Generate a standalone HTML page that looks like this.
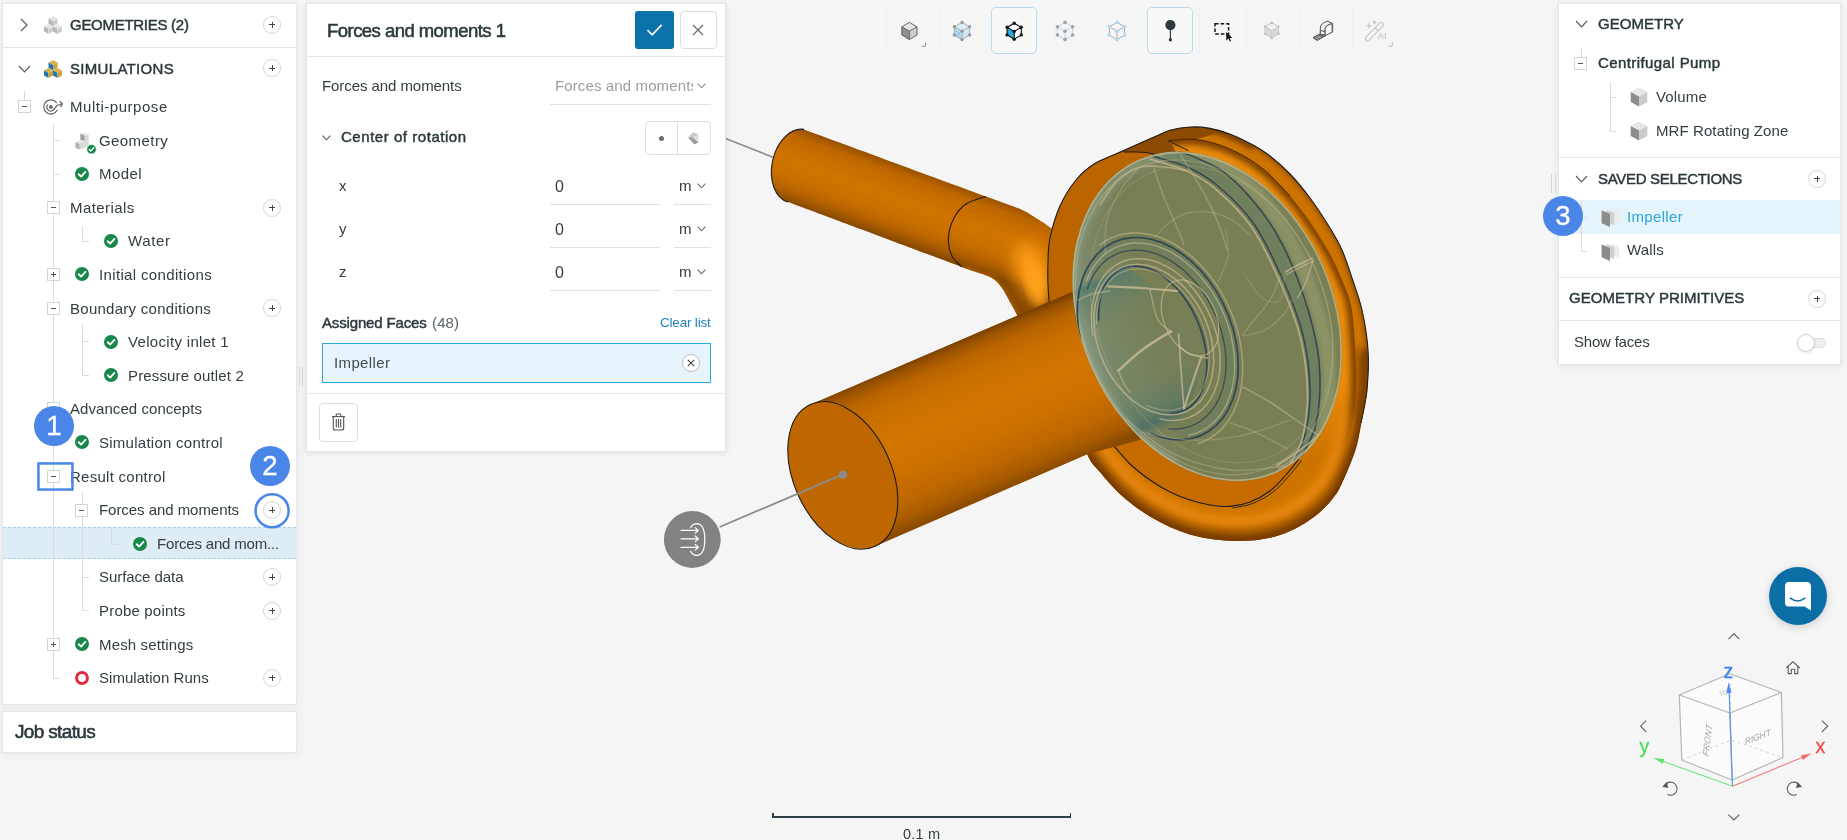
<!DOCTYPE html>
<html lang="en"><head><meta charset="utf-8"><title>Forces and moments - Centrifugal Pump</title>
<style>
*{box-sizing:border-box;margin:0;padding:0}
html,body{width:1847px;height:840px;overflow:hidden;background:#f5f5f5}
body{font-family:"Liberation Sans",sans-serif;color:#333d42}
#app{position:relative;width:1847px;height:840px;overflow:hidden;background:#f5f5f5}
.t{position:absolute;white-space:nowrap;display:block;will-change:transform}
.abs{position:absolute}
.panel{position:absolute;background:#fff;border:1px solid #e6e6e6;box-shadow:0 1px 9px rgba(0,0,0,.065)}
.hl{position:absolute;background:#e6e6e6}
.vl{position:absolute;background:#dcdcdc;width:1px}
.hln{position:absolute;background:#dcdcdc;height:1px}
.exp{position:absolute;width:13px;height:13px;border:1px solid #d4d4d4;background:#fff}
.exp i{position:absolute;left:3px;top:5px;width:5px;height:1px;background:#555}
.exp b{position:absolute;left:5px;top:3px;width:1px;height:5px;background:#555}
.plus{position:absolute;width:18px;height:18px;border:1px solid #d6d6d6;border-radius:50%;background:#fff}
.plus i{position:absolute;left:5px;top:7.5px;width:6px;height:1px;background:#444}
.plus b{position:absolute;left:7.5px;top:5px;width:1px;height:6px;background:#444}
.chk{position:absolute;width:14px;height:14px}
.badge{will-change:transform;position:absolute;width:39px;height:39px;border-radius:50%;background:#4a86e8;color:#fff;text-align:center;font-size:27.5px;line-height:39px;-webkit-text-stroke:0.35px #fff}
svg{position:absolute;overflow:visible}

</style></head>
<body>
<div id="app">
<svg id="model" style="left:0;top:0" width="1847" height="840" viewBox="0 0 1847 840">
<defs>
<linearGradient id="gOut" gradientUnits="userSpaceOnUse" x1="890" y1="158" x2="864" y2="230">
<stop offset="0" stop-color="#7a4000"/><stop offset="0.05" stop-color="#9c5300"/><stop offset="0.15" stop-color="#bb6600"/><stop offset="0.3" stop-color="#c96e00"/><stop offset="0.48" stop-color="#d07400"/><stop offset="0.68" stop-color="#c96f00"/><stop offset="0.84" stop-color="#b56300"/><stop offset="0.94" stop-color="#9a5300"/><stop offset="1" stop-color="#854700"/></linearGradient>
<linearGradient id="gIn" gradientUnits="userSpaceOnUse" x1="946" y1="346" x2="1006" y2="489">
<stop offset="0" stop-color="#784000"/><stop offset="0.04" stop-color="#9a5200"/><stop offset="0.12" stop-color="#b96500"/><stop offset="0.25" stop-color="#ca7000"/><stop offset="0.45" stop-color="#d37500"/><stop offset="0.65" stop-color="#cc7000"/><stop offset="0.82" stop-color="#bd6700"/><stop offset="0.93" stop-color="#a65a00"/><stop offset="1" stop-color="#8a4a00"/></linearGradient>
<linearGradient id="gGreen" gradientUnits="userSpaceOnUse" x1="1073" y1="300" x2="1342" y2="340">
<stop offset="0" stop-color="#8a9a84"/><stop offset="0.12" stop-color="#7b8866"/><stop offset="0.3" stop-color="#787e54"/><stop offset="1" stop-color="#7a8055"/></linearGradient>
<filter id="b2" x="-20%" y="-20%" width="140%" height="140%"><feGaussianBlur stdDeviation="2"/></filter>
<filter id="b3" x="-20%" y="-20%" width="140%" height="140%"><feGaussianBlur stdDeviation="3.2"/></filter>
<filter id="b5" x="-30%" y="-30%" width="160%" height="160%"><feGaussianBlur stdDeviation="5"/></filter>
<filter id="b8" x="-40%" y="-40%" width="180%" height="180%"><feGaussianBlur stdDeviation="8"/></filter>

<clipPath id="cCasing"><path d="M1050.0 312.0 C1047.2 292.8 1048.3 293.3 1048.0 285.0 C1047.7 276.7 1047.7 269.8 1048.0 262.0 C1048.3 254.2 1048.0 247.3 1050.0 238.0 C1052.0 228.7 1055.7 215.7 1060.0 206.0 C1064.3 196.3 1070.3 187.0 1076.0 180.0 C1081.7 173.0 1087.0 168.5 1094.0 164.0 C1101.0 159.5 1108.0 157.5 1118.0 153.0 C1128.0 148.5 1145.2 140.8 1154.0 137.0 C1162.8 133.2 1164.9 131.7 1171.0 130.0 C1177.1 128.3 1184.0 127.3 1190.5 127.0 C1197.0 126.7 1203.2 127.2 1210.0 128.4 C1216.8 129.6 1223.7 131.5 1231.0 134.4 C1238.3 137.3 1247.5 142.0 1254.0 145.6 C1260.5 149.2 1264.0 151.3 1270.0 156.0 C1276.0 160.7 1283.3 167.0 1290.0 174.0 C1296.7 181.0 1303.3 189.0 1310.0 198.0 C1316.7 207.0 1324.7 219.3 1330.0 228.0 C1335.3 236.7 1338.3 241.7 1342.0 250.0 C1345.7 258.3 1348.7 268.0 1352.0 278.0 C1355.3 288.0 1359.3 298.0 1362.0 310.0 C1364.7 322.0 1367.2 336.7 1368.0 350.0 C1368.8 363.3 1368.2 377.8 1367.0 390.0 C1365.8 402.2 1362.8 413.5 1361.0 423.0 C1359.2 432.5 1358.3 439.0 1356.0 447.0 C1353.7 455.0 1350.3 463.2 1347.0 471.0 C1343.7 478.8 1340.5 487.2 1336.0 494.0 C1331.5 500.8 1326.0 506.7 1320.0 512.0 C1314.0 517.3 1306.7 522.2 1300.0 526.0 C1293.3 529.8 1286.7 532.7 1280.0 535.0 C1273.3 537.3 1266.7 538.6 1260.0 539.6 C1253.3 540.6 1246.7 540.9 1240.0 541.0 C1233.3 541.1 1226.7 540.7 1220.0 540.0 C1213.3 539.3 1206.7 538.5 1200.0 537.0 C1193.3 535.5 1186.7 533.5 1180.0 531.0 C1173.3 528.5 1166.7 525.5 1160.0 522.0 C1153.3 518.5 1146.7 514.7 1140.0 510.0 C1133.3 505.3 1126.7 500.3 1120.0 494.0 C1113.3 487.7 1105.5 478.7 1100.0 472.0 C1094.5 465.3 1092.8 466.0 1087.0 454.0 C1081.2 442.0 1071.2 423.7 1065.0 400.0 C1058.8 376.3 1052.8 331.2 1050.0 312.0Z"/></clipPath>
<clipPath id="cGreen"><ellipse cx="1207.2" cy="316.4" rx="126.7" ry="171.2" transform="rotate(-23.6 1207.2 316.4)"/></clipPath>
<linearGradient id="gTeal" gradientUnits="userSpaceOnUse" x1="1100" y1="285" x2="1160" y2="428"><stop offset="0" stop-color="#567a6c" stop-opacity="0.7"/><stop offset="0.28" stop-color="#6b8463" stop-opacity="0.12"/><stop offset="0.68" stop-color="#62806a" stop-opacity="0.15"/><stop offset="1" stop-color="#4c7066" stop-opacity="0.85"/></linearGradient>
<clipPath id="cOut"><path d="M804.0 129.4 C834.3 140.6 950.0 183.1 986.0 196.4 C1022.0 209.7 1011.7 205.4 1020.0 209.0 C1028.3 212.6 1030.8 214.8 1036.0 218.0 C1041.2 221.2 1043.7 222.7 1051.0 228.0 C1058.3 233.3 1075.2 246.3 1080.0 250.0 L1085 340 L1030 345 C1027.8 340.0 1020.3 322.2 1017.0 315.0 C1013.7 307.8 1012.5 306.5 1010.0 302.0 C1007.5 297.5 1005.0 292.0 1002.0 288.0 C999.0 284.0 997.3 281.0 992.0 278.0 C986.7 275.0 975.0 271.8 970.0 270.0 C965.0 268.2 992.3 278.3 962.0 267.0 C931.7 255.7 817.0 212.8 788.0 202.0 A24.9 37.2 12.4 0 1 804 129.4Z"/></clipPath>
<clipPath id="cIn"><path d="M820 400 L1072 292 L1140 300 L1150 440 L1088 454 L880 542Z"/></clipPath>
</defs>
<path d="M725.5 138.6 L773.5 157.4" stroke="#8c8c8c" stroke-width="1.6" fill="none"/>
<path d="M804.0 129.4 C834.3 140.6 950.0 183.1 986.0 196.4 C1022.0 209.7 1011.7 205.4 1020.0 209.0 C1028.3 212.6 1030.8 214.8 1036.0 218.0 C1041.2 221.2 1043.7 222.7 1051.0 228.0 C1058.3 233.3 1075.2 246.3 1080.0 250.0 L1085 340 L1030 345 C1027.8 340.0 1020.3 322.2 1017.0 315.0 C1013.7 307.8 1012.5 306.5 1010.0 302.0 C1007.5 297.5 1005.0 292.0 1002.0 288.0 C999.0 284.0 997.3 281.0 992.0 278.0 C986.7 275.0 975.0 271.8 970.0 270.0 C965.0 268.2 992.3 278.3 962.0 267.0 C931.7 255.7 817.0 212.8 788.0 202.0 A24.9 37.2 12.4 0 1 804 129.4Z" fill="url(#gOut)"/>
<g clip-path="url(#cOut)">
<path d="M975 190 L1090 235 L1090 200 L975 170Z" fill="#7e4200" opacity="0.0"/>
<ellipse cx="1032" cy="272" rx="15" ry="30" transform="rotate(-20 1032 272)" fill="#ff9c18" filter="url(#b8)"/>
<ellipse cx="1036" cy="285" rx="8" ry="22" transform="rotate(-14 1036 285)" fill="#ffa21e" filter="url(#b5)"/>
<path d="M962 267 L992 278 L1002 288 L1010 302 L1017 315" stroke="#a35800" stroke-width="5" fill="none" filter="url(#b2)"/>
</g>
<path d="M804 129.4 A24.9 37.2 12.4 0 0 788 202" fill="none" stroke="#1c1c1c" stroke-width="1.1"/>
<path d="M986.0 196.4 C982.7 197.7 971.3 200.4 966.0 204.0 C960.7 207.6 956.9 212.3 954.0 218.0 C951.1 223.7 948.7 231.7 948.4 238.0 C948.1 244.3 949.7 251.2 952.0 256.0 C954.3 260.8 960.3 265.2 962.0 267.0" fill="none" stroke="#1c1c1c" stroke-width="1.1"/>
<path d="M1050.0 312.0 C1047.2 292.8 1048.3 293.3 1048.0 285.0 C1047.7 276.7 1047.7 269.8 1048.0 262.0 C1048.3 254.2 1048.0 247.3 1050.0 238.0 C1052.0 228.7 1055.7 215.7 1060.0 206.0 C1064.3 196.3 1070.3 187.0 1076.0 180.0 C1081.7 173.0 1087.0 168.5 1094.0 164.0 C1101.0 159.5 1108.0 157.5 1118.0 153.0 C1128.0 148.5 1145.2 140.8 1154.0 137.0 C1162.8 133.2 1164.9 131.7 1171.0 130.0 C1177.1 128.3 1184.0 127.3 1190.5 127.0 C1197.0 126.7 1203.2 127.2 1210.0 128.4 C1216.8 129.6 1223.7 131.5 1231.0 134.4 C1238.3 137.3 1247.5 142.0 1254.0 145.6 C1260.5 149.2 1264.0 151.3 1270.0 156.0 C1276.0 160.7 1283.3 167.0 1290.0 174.0 C1296.7 181.0 1303.3 189.0 1310.0 198.0 C1316.7 207.0 1324.7 219.3 1330.0 228.0 C1335.3 236.7 1338.3 241.7 1342.0 250.0 C1345.7 258.3 1348.7 268.0 1352.0 278.0 C1355.3 288.0 1359.3 298.0 1362.0 310.0 C1364.7 322.0 1367.2 336.7 1368.0 350.0 C1368.8 363.3 1368.2 377.8 1367.0 390.0 C1365.8 402.2 1362.8 413.5 1361.0 423.0 C1359.2 432.5 1358.3 439.0 1356.0 447.0 C1353.7 455.0 1350.3 463.2 1347.0 471.0 C1343.7 478.8 1340.5 487.2 1336.0 494.0 C1331.5 500.8 1326.0 506.7 1320.0 512.0 C1314.0 517.3 1306.7 522.2 1300.0 526.0 C1293.3 529.8 1286.7 532.7 1280.0 535.0 C1273.3 537.3 1266.7 538.6 1260.0 539.6 C1253.3 540.6 1246.7 540.9 1240.0 541.0 C1233.3 541.1 1226.7 540.7 1220.0 540.0 C1213.3 539.3 1206.7 538.5 1200.0 537.0 C1193.3 535.5 1186.7 533.5 1180.0 531.0 C1173.3 528.5 1166.7 525.5 1160.0 522.0 C1153.3 518.5 1146.7 514.7 1140.0 510.0 C1133.3 505.3 1126.7 500.3 1120.0 494.0 C1113.3 487.7 1105.5 478.7 1100.0 472.0 C1094.5 465.3 1092.8 466.0 1087.0 454.0 C1081.2 442.0 1071.2 423.7 1065.0 400.0 C1058.8 376.3 1052.8 331.2 1050.0 312.0Z" fill="#cc7300"/>
<g clip-path="url(#cCasing)">
<path d="M1087.0 454.0 C1089.2 457.0 1094.5 465.3 1100.0 472.0 C1105.5 478.7 1113.3 487.7 1120.0 494.0 C1126.7 500.3 1133.3 505.3 1140.0 510.0 C1146.7 514.7 1153.3 518.5 1160.0 522.0 C1166.7 525.5 1173.3 528.5 1180.0 531.0 C1186.7 533.5 1193.3 535.5 1200.0 537.0 C1206.7 538.5 1213.3 539.3 1220.0 540.0 C1226.7 540.7 1233.3 541.1 1240.0 541.0 C1246.7 540.9 1253.3 540.6 1260.0 539.6 C1266.7 538.6 1273.3 537.3 1280.0 535.0 C1286.7 532.7 1293.3 529.8 1300.0 526.0 C1306.7 522.2 1314.0 517.3 1320.0 512.0 C1326.0 506.7 1331.5 500.8 1336.0 494.0 C1340.5 487.2 1343.7 478.8 1347.0 471.0 C1350.3 463.2 1353.7 455.0 1356.0 447.0 C1358.3 439.0 1359.2 432.5 1361.0 423.0 C1362.8 413.5 1365.8 402.2 1367.0 390.0 C1368.2 377.8 1367.8 356.7 1368.0 350.0" stroke="#8a4800" stroke-width="26" fill="none" filter="url(#b5)" opacity="0.75"/>
<path d="M1087.0 454.0 C1089.2 457.0 1094.5 465.3 1100.0 472.0 C1105.5 478.7 1113.3 487.7 1120.0 494.0 C1126.7 500.3 1133.3 505.3 1140.0 510.0 C1146.7 514.7 1153.3 518.5 1160.0 522.0 C1166.7 525.5 1173.3 528.5 1180.0 531.0 C1186.7 533.5 1193.3 535.5 1200.0 537.0 C1206.7 538.5 1213.3 539.3 1220.0 540.0 C1226.7 540.7 1233.3 541.1 1240.0 541.0 C1246.7 540.9 1253.3 540.6 1260.0 539.6 C1266.7 538.6 1273.3 537.3 1280.0 535.0 C1286.7 532.7 1293.3 529.8 1300.0 526.0 C1306.7 522.2 1314.0 517.3 1320.0 512.0 C1326.0 506.7 1331.5 500.8 1336.0 494.0 C1340.5 487.2 1343.7 478.8 1347.0 471.0 C1350.3 463.2 1353.7 455.0 1356.0 447.0 C1358.3 439.0 1359.2 432.5 1361.0 423.0 C1362.8 413.5 1365.8 402.2 1367.0 390.0 C1368.2 377.8 1367.8 356.7 1368.0 350.0" stroke="#7a3e00" stroke-width="10" fill="none" filter="url(#b3)"/>
<path d="M1087.0 454.0 C1089.2 457.0 1094.5 465.3 1100.0 472.0 C1105.5 478.7 1113.3 487.7 1120.0 494.0 C1126.7 500.3 1133.3 505.3 1140.0 510.0 C1146.7 514.7 1153.3 518.5 1160.0 522.0 C1166.7 525.5 1173.3 528.5 1180.0 531.0 C1186.7 533.5 1193.3 535.5 1200.0 537.0 C1206.7 538.5 1213.3 539.3 1220.0 540.0 C1226.7 540.7 1233.3 541.1 1240.0 541.0 C1246.7 540.9 1253.3 540.6 1260.0 539.6 C1266.7 538.6 1273.3 537.3 1280.0 535.0 C1286.7 532.7 1293.3 529.8 1300.0 526.0 C1306.7 522.2 1314.0 517.3 1320.0 512.0 C1326.0 506.7 1331.5 500.8 1336.0 494.0 C1340.5 487.2 1343.7 478.8 1347.0 471.0 C1350.3 463.2 1353.7 455.0 1356.0 447.0 C1358.3 439.0 1359.2 432.5 1361.0 423.0 C1362.8 413.5 1365.8 402.2 1367.0 390.0 C1368.2 377.8 1367.8 356.7 1368.0 350.0" stroke="#6e3800" stroke-width="3" fill="none" filter="url(#b2)" opacity="0.8"/>
<path d="M1099.2 442.2 C1101.1 444.9 1105.9 452.5 1110.9 458.5 C1115.9 464.5 1123.0 472.7 1129.0 478.4 C1135.1 484.2 1141.1 488.7 1147.1 492.9 C1153.2 497.1 1159.2 500.6 1165.2 503.8 C1171.3 506.9 1177.3 509.6 1183.3 511.9 C1189.4 514.2 1195.4 516.0 1201.4 517.3 C1207.5 518.7 1213.5 519.4 1219.5 520.0 C1225.6 520.7 1231.6 521.0 1237.6 521.0 C1243.7 520.9 1249.7 520.6 1255.7 519.7 C1261.8 518.8 1267.8 517.6 1273.8 515.5 C1279.9 513.5 1285.9 510.8 1291.9 507.4 C1298.0 503.9 1304.6 499.5 1310.0 494.7 C1315.5 489.9 1320.4 484.6 1324.5 478.4 C1328.6 472.2 1331.4 464.7 1334.5 457.6 C1337.5 450.5 1340.5 443.1 1342.6 435.9 C1344.7 428.6 1346.4 417.8 1347.1 414.2" stroke="#ec8a09" stroke-width="10" fill="none" filter="url(#b5)"/>
<path d="M1100.0 160.0 C1104.0 158.5 1114.8 154.8 1124.0 151.0 C1133.2 147.2 1147.2 140.5 1155.0 137.0 C1162.8 133.5 1165.1 131.7 1171.0 130.0 C1176.9 128.3 1184.0 127.3 1190.5 127.0 C1197.0 126.7 1203.2 127.2 1210.0 128.4 C1216.8 129.6 1223.7 131.5 1231.0 134.4 C1238.3 137.3 1250.2 143.7 1254.0 145.6" stroke="#7c4100" stroke-width="9" fill="none" filter="url(#b2)"/>
<path d="M1231.0 134.4 C1234.8 136.3 1247.5 142.0 1254.0 145.6 C1260.5 149.2 1264.0 151.3 1270.0 156.0 C1276.0 160.7 1283.3 167.0 1290.0 174.0 C1296.7 181.0 1303.3 189.0 1310.0 198.0 C1316.7 207.0 1324.7 219.3 1330.0 228.0 C1335.3 236.7 1338.3 241.7 1342.0 250.0 C1345.7 258.3 1348.7 268.0 1352.0 278.0 C1355.3 288.0 1359.3 298.0 1362.0 310.0 C1364.7 322.0 1367.2 336.7 1368.0 350.0 C1368.8 363.3 1368.2 377.8 1367.0 390.0 C1365.8 402.2 1362.0 417.5 1361.0 423.0" stroke="#8a4900" stroke-width="5" fill="none" filter="url(#b2)" opacity="0.85"/>
</g>
<path d="M1123.8 151.5 L1154.8 137.3 L1171.4 130.2 L1190.5 127.2 L1205 128 L1215 134 L1195 139.4 L1168.5 140.6 L1188 150 L1175 158 L1160.7 155.5 L1147.6 152.9Z" fill="#8c4a00"/>
<clipPath id="cBand1"><path d="M1168.5 140.6 C1172.9 140.4 1186.6 138.7 1195.0 139.4 C1203.4 140.1 1211.0 142.1 1219.0 144.8 C1227.0 147.5 1235.0 151.0 1243.0 155.5 C1251.0 160.0 1258.9 165.2 1266.7 172.0 C1274.5 178.8 1282.8 187.7 1290.0 196.0 C1297.2 204.3 1303.3 212.3 1310.0 222.0 C1316.7 231.7 1324.7 244.3 1330.0 254.0 C1335.3 263.7 1338.5 271.5 1342.0 280.0 C1345.5 288.5 1348.8 294.2 1351.0 305.0 C1353.2 315.8 1354.2 330.8 1355.0 345.0 C1355.8 359.2 1356.5 376.7 1356.0 390.0 C1355.5 403.3 1354.0 414.7 1352.0 425.0 C1350.0 435.3 1345.3 447.5 1344.0 452.0 L1335 462 L1300 440 L1318 330 L1280 230 L1215 170 L1180 158Z"/></clipPath>
<linearGradient id="gFade" gradientUnits="userSpaceOnUse" x1="0" y1="385" x2="0" y2="455"><stop offset="0" stop-color="#fff"/><stop offset="1" stop-color="#000"/></linearGradient>
<mask id="mBand1" maskUnits="userSpaceOnUse" x="1100" y="100" width="320" height="420"><rect x="1100" y="100" width="320" height="420" fill="url(#gFade)"/></mask>
<g clip-path="url(#cBand1)"><g mask="url(#mBand1)">
<path d="M1168.5 140.6 C1172.9 140.4 1186.6 138.7 1195.0 139.4 C1203.4 140.1 1211.0 142.1 1219.0 144.8 C1227.0 147.5 1235.0 151.0 1243.0 155.5 C1251.0 160.0 1258.9 165.2 1266.7 172.0 C1274.5 178.8 1282.8 187.7 1290.0 196.0 C1297.2 204.3 1303.3 212.3 1310.0 222.0 C1316.7 231.7 1324.7 244.3 1330.0 254.0 C1335.3 263.7 1338.5 271.5 1342.0 280.0 C1345.5 288.5 1348.8 294.2 1351.0 305.0 C1353.2 315.8 1354.2 330.8 1355.0 345.0 C1355.8 359.2 1356.5 376.7 1356.0 390.0 C1355.5 403.3 1354.0 414.7 1352.0 425.0 C1350.0 435.3 1345.3 447.5 1344.0 452.0 L1335 462 L1300 440 L1318 330 L1280 230 L1215 170 L1180 158Z" fill="#e98b0b"/>
<path d="M1168.5 140.6 C1172.9 140.4 1186.6 138.7 1195.0 139.4 C1203.4 140.1 1211.0 142.1 1219.0 144.8 C1227.0 147.5 1235.0 151.0 1243.0 155.5 C1251.0 160.0 1258.9 165.2 1266.7 172.0 C1274.5 178.8 1282.8 187.7 1290.0 196.0 C1297.2 204.3 1303.3 212.3 1310.0 222.0 C1316.7 231.7 1324.7 244.3 1330.0 254.0 C1335.3 263.7 1338.5 271.5 1342.0 280.0 C1345.5 288.5 1348.8 294.2 1351.0 305.0 C1353.2 315.8 1354.2 330.8 1355.0 345.0 C1355.8 359.2 1356.5 376.7 1356.0 390.0 C1355.5 403.3 1354.0 414.7 1352.0 425.0 C1350.0 435.3 1345.3 447.5 1344.0 452.0" stroke="#8a4a00" stroke-width="11" fill="none" filter="url(#b3)"/>
<path d="M1168.5 140.6 C1172.9 140.4 1186.6 138.7 1195.0 139.4 C1203.4 140.1 1211.0 142.1 1219.0 144.8 C1227.0 147.5 1235.0 151.0 1243.0 155.5 C1251.0 160.0 1258.9 165.2 1266.7 172.0 C1274.5 178.8 1282.8 187.7 1290.0 196.0 C1297.2 204.3 1303.3 212.3 1310.0 222.0 C1316.7 231.7 1324.7 244.3 1330.0 254.0 C1335.3 263.7 1338.5 271.5 1342.0 280.0 C1345.5 288.5 1348.8 294.2 1351.0 305.0 C1353.2 315.8 1354.2 330.8 1355.0 345.0 C1355.8 359.2 1356.5 376.7 1356.0 390.0 C1355.5 403.3 1354.0 414.7 1352.0 425.0 C1350.0 435.3 1345.3 447.5 1344.0 452.0" stroke="#7a4000" stroke-width="3.5" fill="none" filter="url(#b2)" opacity="0.8"/>
</g></g>
<path d="M1168.5 140.6 C1172.9 140.4 1186.6 138.7 1195.0 139.4 C1203.4 140.1 1211.0 142.1 1219.0 144.8 C1227.0 147.5 1235.0 151.0 1243.0 155.5 C1251.0 160.0 1258.9 165.2 1266.7 172.0 C1274.5 178.8 1286.1 192.0 1290.0 196.0" stroke="#2a1a08" stroke-width="1" fill="none" opacity="0.75"/>
<path d="M1168.5 140.8 L1188.5 150.8" stroke="#1c1c1c" stroke-width="1" fill="none"/>
<path d="M1050.0 312.0 C1049.7 307.5 1048.3 293.3 1048.0 285.0 C1047.7 276.7 1047.7 269.8 1048.0 262.0 C1048.3 254.2 1048.0 247.3 1050.0 238.0 C1052.0 228.7 1055.7 215.7 1060.0 206.0 C1064.3 196.3 1070.3 187.0 1076.0 180.0 C1081.7 173.0 1087.0 168.5 1094.0 164.0 C1101.0 159.5 1114.0 154.8 1118.0 153.0 L1123.8 152 L1147.6 152.9 L1160.7 155.5 L1175 160 L1110 200 L1080 290 L1074 300Z" fill="#bb6500"/>
<path d="M1112.0 443.6 C1115.0 447.0 1123.7 457.9 1130.0 464.0 C1136.3 470.1 1143.3 475.3 1150.0 480.0 C1156.7 484.7 1163.3 488.7 1170.0 492.0 C1176.7 495.3 1183.3 497.8 1190.0 500.0 C1196.7 502.2 1203.3 503.9 1210.0 505.0 C1216.7 506.1 1223.3 506.9 1230.0 506.4 C1236.7 505.9 1243.3 504.6 1250.0 502.0 C1256.7 499.4 1264.0 495.5 1270.0 491.0 C1276.0 486.5 1281.2 480.3 1286.0 475.0 C1290.8 469.7 1296.8 461.7 1299.0 459.0 L1320 436 L1240 470 L1134 430 L1100 440Z" fill="#c56b00"/>
<path d="M1050.0 312.0 C1049.7 307.5 1048.3 293.3 1048.0 285.0 C1047.7 276.7 1047.7 269.8 1048.0 262.0 C1048.3 254.2 1048.0 247.3 1050.0 238.0 C1052.0 228.7 1055.7 215.7 1060.0 206.0 C1064.3 196.3 1070.3 187.0 1076.0 180.0 C1081.7 173.0 1087.0 168.5 1094.0 164.0 C1101.0 159.5 1108.0 157.5 1118.0 153.0 C1128.0 148.5 1145.2 140.8 1154.0 137.0 C1162.8 133.2 1164.9 131.7 1171.0 130.0 C1177.1 128.3 1184.0 127.3 1190.5 127.0 C1197.0 126.7 1203.2 127.2 1210.0 128.4 C1216.8 129.6 1223.7 131.5 1231.0 134.4 C1238.3 137.3 1247.5 142.0 1254.0 145.6 C1260.5 149.2 1264.0 151.3 1270.0 156.0 C1276.0 160.7 1283.3 167.0 1290.0 174.0 C1296.7 181.0 1303.3 189.0 1310.0 198.0 C1316.7 207.0 1324.7 219.3 1330.0 228.0 C1335.3 236.7 1338.3 241.7 1342.0 250.0 C1345.7 258.3 1348.7 268.0 1352.0 278.0 C1355.3 288.0 1359.3 298.0 1362.0 310.0 C1364.7 322.0 1367.2 336.7 1368.0 350.0 C1368.8 363.3 1368.2 377.8 1367.0 390.0 C1365.8 402.2 1362.0 417.5 1361.0 423.0" fill="none" stroke="#1c1c1c" stroke-width="1.1"/>
<path d="M1367.0 390.0 C1366.0 395.5 1362.8 413.5 1361.0 423.0 C1359.2 432.5 1358.3 439.0 1356.0 447.0 C1353.7 455.0 1350.3 463.2 1347.0 471.0 C1343.7 478.8 1337.8 490.2 1336.0 494.0" fill="none" stroke="#5a2f00" stroke-width="1.1" opacity="0.6"/>
<path d="M1123.8 152 Q1140 151.6 1147.6 152.9 T1162 156" fill="none" stroke="#1c1c1c" stroke-width="1"/>
<path d="M1112.0 443.6 C1115.0 447.0 1123.7 457.9 1130.0 464.0 C1136.3 470.1 1143.3 475.3 1150.0 480.0 C1156.7 484.7 1163.3 488.7 1170.0 492.0 C1176.7 495.3 1183.3 497.8 1190.0 500.0 C1196.7 502.2 1203.3 503.9 1210.0 505.0 C1216.7 506.1 1223.3 506.9 1230.0 506.4 C1236.7 505.9 1243.3 504.6 1250.0 502.0 C1256.7 499.4 1264.0 495.5 1270.0 491.0 C1276.0 486.5 1281.2 480.3 1286.0 475.0 C1290.8 469.7 1296.8 461.7 1299.0 459.0" fill="none" stroke="#1c1c1c" stroke-width="1.1"/>
<path d="M1232.5 507.9 C1235.8 507.2 1245.8 506.1 1252.5 503.5 C1259.2 500.9 1266.5 497.0 1272.5 492.5 C1278.5 488.0 1283.7 481.8 1288.5 476.5 C1293.3 471.2 1299.3 463.2 1301.5 460.5" fill="none" stroke="#1c1c1c" stroke-width="0.9"/>
<path d="M811 404.3 L1072 292 L1125 300 L1140 440 L1088 454 L874.6 546.5Z" fill="url(#gIn)"/>
<ellipse cx="842.8" cy="475.4" rx="48.8" ry="77.9" transform="rotate(-24.6 842.8 475.4)" fill="#be6700" stroke="#1c1c1c" stroke-width="1.1"/>
<path d="M719.6 527 L843 474.4" stroke="#8c8c8c" stroke-width="1.9" fill="none"/><circle cx="843" cy="474.6" r="4.2" fill="#8c8c8c"/>
<ellipse cx="1207.2" cy="316.4" rx="126.7" ry="171.2" transform="rotate(-23.6 1207.2 316.4)" fill="url(#gGreen)"/>
<g clip-path="url(#cGreen)">
<path d="M1060 297.2 L1128 268 Q1175 300 1200 345 Q1205 385 1183 411 L1088 454Z" fill="url(#gTeal)"/>
<path d="M1088 454 L1183 411" stroke="#4c7066" stroke-width="9" fill="none" filter="url(#b3)" opacity="0.8"/>
<path d="M1066 296.5 L1128 269.5" stroke="#557a6c" stroke-width="6" fill="none" filter="url(#b2)" opacity="0.8"/>
<path d="M1180 151 Q1100 165 1076 250 Q1066 330 1113 406 Q1140 445 1175 463" stroke="#93a894" stroke-width="9" fill="none" filter="url(#b3)" opacity="0.5"/>
<path d="M1187.0 148.5 C1194.1 151.7 1217.5 160.1 1229.5 167.9 C1241.5 175.7 1249.8 184.9 1259.0 195.4 C1268.2 205.9 1277.0 217.2 1285.0 231.0 C1293.0 244.8 1300.4 260.2 1307.0 278.0 C1313.6 295.8 1321.0 320.5 1324.7 338.0 C1328.4 355.5 1329.1 368.3 1329.0 383.0 C1328.9 397.7 1327.2 414.0 1324.0 426.0 C1320.8 438.0 1312.3 450.2 1310.0 455.0" fill="none" stroke="#9aa274" stroke-width="13" opacity="0.55" filter="url(#b2)"/>
<path d="M1165.0 153.2 C1171.5 155.8 1192.7 162.2 1204.2 168.6 C1215.7 175.0 1223.9 181.7 1234.0 191.7 C1244.1 201.7 1255.6 213.8 1265.0 228.5 C1274.4 243.2 1283.1 261.8 1290.5 280.0 C1297.9 298.2 1305.3 319.6 1309.3 337.5 C1313.4 355.4 1314.9 371.8 1315.0 387.5 C1315.1 403.2 1313.0 419.6 1310.0 431.5 C1307.0 443.4 1299.2 454.4 1297.0 459.0" fill="none" stroke="#62806f" stroke-width="8" opacity="0.45"/>
<path d="M1152.0 156.0 C1158.0 157.9 1176.8 162.3 1187.8 167.3 C1198.8 172.3 1207.0 176.6 1218.0 186.0 C1229.0 195.4 1243.2 208.3 1254.0 224.0 C1264.8 239.7 1274.8 261.5 1283.0 280.0 C1291.2 298.5 1298.5 316.7 1303.0 335.0 C1307.5 353.3 1309.7 373.3 1310.0 390.0 C1310.3 406.7 1307.8 423.2 1305.0 435.0 C1302.2 446.8 1295.0 456.7 1293.0 461.0" fill="none" stroke="#31485a" stroke-width="1.6"/>
<path d="M1178.0 150.5 C1185.1 153.7 1208.5 162.1 1220.5 169.9 C1232.5 177.7 1240.8 186.9 1250.0 197.4 C1259.2 207.9 1268.0 219.2 1276.0 233.0 C1284.0 246.8 1291.4 262.2 1298.0 280.0 C1304.6 297.8 1312.0 322.5 1315.7 340.0 C1319.4 357.5 1320.1 370.3 1320.0 385.0 C1319.9 399.7 1318.2 416.0 1315.0 428.0 C1311.8 440.0 1303.3 452.2 1301.0 457.0" fill="none" stroke="#31485a" stroke-width="1.6"/>
<path d="M1149.5 159.0 C1155.5 160.9 1174.3 165.3 1185.3 170.3 C1196.3 175.3 1204.5 179.6 1215.5 189.0 C1226.5 198.4 1240.7 211.3 1251.5 227.0 C1262.3 242.7 1272.3 264.5 1280.5 283.0 C1288.7 301.5 1296.0 319.7 1300.5 338.0 C1305.0 356.3 1307.2 376.3 1307.5 393.0 C1307.8 409.7 1305.3 426.2 1302.5 438.0 C1299.7 449.8 1292.5 459.7 1290.5 464.0" fill="none" stroke="#c9bc95" stroke-width="1.8" opacity="0.7"/>
<path d="M1100.0 205.0 C1103.0 200.8 1111.4 186.3 1118.0 180.0 C1124.6 173.7 1131.6 169.5 1139.4 167.3 C1147.2 165.1 1156.9 166.3 1165.0 167.0 C1173.1 167.7 1184.0 170.5 1187.8 171.2" fill="none" stroke="#c9bc95" stroke-width="1.6" opacity="0.6"/>
<ellipse cx="1207.2" cy="316.4" rx="125.9" ry="170.2" transform="rotate(-23.6 1207.2 316.4)" fill="none" stroke="#c9bc95" stroke-width="1.8" opacity="0.7"/>
<ellipse cx="1204.2" cy="317.4" rx="121.0" ry="163.5" transform="rotate(-23.6 1204.2 317.4)" fill="none" stroke="#c9bc95" stroke-width="1.2" opacity="0.4"/>
<ellipse cx="1211.2" cy="314.4" rx="114.0" ry="154.1" transform="rotate(-23.6 1211.2 314.4)" fill="none" stroke="#c9bc95" stroke-width="1.0" opacity="0.25"/>
<path d="M1080.5 339.9 L1078.2 327.1 L1077.3 314.5 L1077.6 302.2 L1079.3 290.5 L1082.2 279.7 L1086.3 269.7 L1091.6 260.9 L1097.9 253.3 L1105.2 247.1 L1113.4 242.4 L1122.2 239.2 L1131.7 237.6 L1141.5 237.6 L1151.7 239.3 L1161.9 242.6 L1172.0 247.4 L1182.0 253.7 L1191.5 261.3 L1200.5 270.2 L1208.8 280.2 L1216.3 291.1 L1222.8 302.8 L1228.3 315.1 L1232.7 327.8 L1235.8 340.6 L1237.7 353.4 L1238.3 365.9 L1237.7 378.1 L1235.7 389.5 L1232.5 400.2 L1228.0 409.9 L1222.5 418.4 L1215.9 425.6 L1208.3 431.5 L1200.0 435.8 L1191.0 438.6 L1181.4 439.8 L1171.5 439.3 L1161.3 437.2 L1151.1 433.5" fill="none" stroke="#31485a" stroke-width="1.8"/>
<path d="M1087.3 289.2 L1090.1 281.7 L1093.6 274.9 L1097.7 268.8 L1102.5 263.4 L1107.8 258.9 L1113.7 255.3 L1120.0 252.6 L1126.7 250.9 L1133.7 250.1 L1140.9 250.3 L1148.3 251.5 L1155.8 253.6 L1163.2 256.7 L1170.6 260.7 L1177.7 265.6 L1184.7 271.2 L1191.3 277.7 L1197.5 284.8 L1203.2 292.5 L1208.4 300.7 L1213.0 309.3 L1217.0 318.3 L1220.3 327.5 L1222.9 336.9 L1224.7 346.2 L1225.8 355.5 L1226.1 364.7 L1225.6 373.5 L1224.3 382.0 L1222.3 390.0 L1219.5 397.5 L1216.0 404.3 L1211.9 410.4 L1207.1 415.8 L1201.8 420.3 L1195.9 423.9 L1189.6 426.6 L1182.9 428.3 L1175.9 429.1 L1168.7 428.9" fill="none" stroke="#31485a" stroke-width="1.4" opacity="0.85"/>
<path d="M1098.7 320.8 L1098.6 313.0 L1099.1 305.6 L1100.2 298.5 L1102.0 292.0 L1104.5 286.0 L1107.5 280.8 L1111.1 276.2 L1115.2 272.4 L1119.8 269.5 L1124.8 267.4 L1130.1 266.2 L1135.7 266.0 L1141.5 266.6 L1147.5 268.1 L1153.5 270.6 L1159.5 273.8 L1165.4 277.9 L1171.2 282.8 L1176.7 288.3 L1182.0 294.5 L1186.8 301.3 L1191.3 308.5 L1195.3 316.1 L1198.7 324.0 L1201.6 332.1 L1203.9 340.3 L1205.5 348.5 L1206.5 356.5 L1206.9 364.4 L1206.5 371.9 L1205.5 379.1 L1203.8 385.7 L1201.5 391.8 L1198.7 397.3 L1195.2 402.0 L1191.2 406.0 L1186.7 409.1 L1181.8 411.4 L1176.6 412.8 L1171.0 413.3" fill="none" stroke="#31485a" stroke-width="1.8"/>
<path d="M1088.4 274.8 L1092.0 268.2 L1096.3 262.2 L1101.2 257.0 L1106.6 252.6 L1112.5 249.0 L1118.9 246.3 L1125.5 244.5 L1132.5 243.6 L1139.7 243.6 L1147.1 244.5 L1154.5 246.4 L1162.0 249.1 L1169.4 252.7 L1176.7 257.1 L1183.8 262.4 L1190.6 268.3 L1197.1 275.0 L1203.2 282.2 L1208.8 290.0 L1214.0 298.3 L1218.6 307.0 L1222.6 316.0 L1225.9 325.2 L1228.6 334.5 L1230.6 343.9 L1231.8 353.2 L1232.4 362.4 L1232.2 371.4 L1231.3 380.1 L1229.6 388.4 L1227.3 396.2 L1224.2 403.4 L1220.6 410.0 L1216.3 416.0 L1211.4 421.2 L1206.0 425.6 L1200.1 429.2 L1193.7 431.9 L1187.1 433.7 L1180.1 434.6" fill="none" stroke="#62806f" stroke-width="7" opacity="0.4"/>
<path d="M1099.6 245.1 L1105.1 241.2 L1110.9 238.1 L1117.1 235.6 L1123.6 233.9 L1130.4 233.0 L1137.3 232.9 L1144.4 233.5 L1151.5 234.9 L1158.8 237.0 L1166.0 239.9 L1173.1 243.5 L1180.2 247.9 L1187.1 252.8 L1193.7 258.4 L1200.2 264.6 L1206.3 271.3 L1212.0 278.6 L1217.4 286.2 L1222.3 294.3 L1226.8 302.7 L1230.7 311.3 L1234.2 320.1 L1237.1 329.1 L1239.4 338.2 L1241.1 347.3 L1242.2 356.3 L1242.7 365.2 L1242.6 373.9 L1241.9 382.4 L1240.6 390.5 L1238.7 398.3 L1236.1 405.7 L1233.1 412.6 L1229.4 418.9 L1225.3 424.7 L1220.7 429.9 L1215.6 434.4 L1210.1 438.2 L1204.2 441.4 L1198.0 443.7" fill="none" stroke="#c9bc95" stroke-width="1.5" opacity="0.55"/>
<path d="M1086.4 281.1 L1089.5 273.8 L1093.3 267.2 L1097.7 261.3 L1102.7 256.1 L1108.3 251.7 L1114.3 248.2 L1120.7 245.6 L1127.5 243.8 L1134.5 243.0 L1141.8 243.1 L1149.3 244.2 L1156.8 246.1 L1164.4 249.0 L1171.9 252.7 L1179.2 257.3 L1186.3 262.7 L1193.2 268.8 L1199.7 275.6 L1205.8 283.0 L1211.5 290.9 L1216.6 299.3 L1221.2 308.1 L1225.2 317.2 L1228.5 326.6 L1231.1 336.0 L1233.0 345.5 L1234.2 354.9 L1234.7 364.2 L1234.4 373.3 L1233.4 382.0 L1231.7 390.3 L1229.2 398.1 L1226.1 405.4 L1222.3 412.0 L1217.9 417.9 L1212.9 423.1 L1207.3 427.5 L1201.3 431.0 L1194.9 433.6 L1188.1 435.4" fill="none" stroke="#c9bc95" stroke-width="1.4" opacity="0.6"/>
<path d="M1093.1 336.4 L1091.7 326.6 L1091.4 316.9 L1092.0 307.6 L1093.5 298.8 L1096.0 290.6 L1099.3 283.1 L1103.5 276.5 L1108.5 270.8 L1114.2 266.1 L1120.5 262.5 L1127.3 260.1 L1134.6 258.8 L1142.2 258.8 L1149.9 259.9 L1157.8 262.3 L1165.6 265.8 L1173.3 270.4 L1180.7 276.0 L1187.8 282.6 L1194.4 290.0 L1200.4 298.2 L1205.7 307.0 L1210.3 316.3 L1214.1 325.9 L1217.0 335.7 L1219.0 345.6 L1220.1 355.4 L1220.2 365.0 L1219.3 374.1 L1217.5 382.8 L1214.8 390.8 L1211.2 398.1 L1206.7 404.5 L1201.5 409.9 L1195.7 414.3 L1189.2 417.5 L1182.2 419.6 L1174.9 420.5 L1167.2 420.2 L1159.4 418.7" fill="none" stroke="#c9bc95" stroke-width="1.5" opacity="0.65"/>
<path d="M1103.6 362.6 L1099.1 351.1 L1095.9 339.3 L1094.2 327.5 L1093.9 316.0 L1095.1 305.1 L1097.7 295.0 L1101.7 286.1 L1107.0 278.4 L1113.5 272.3 L1120.9 267.8 L1129.2 265.1 L1138.0 264.2 L1147.3 265.2 L1156.7 268.0 L1166.0 272.6 L1175.1 278.8 L1183.6 286.5 L1191.4 295.6 L1198.2 305.7 L1204.0 316.6 L1208.5 328.1 L1211.7 339.9 L1213.4 351.7 L1213.7 363.2 L1212.5 374.1 L1209.9 384.2 L1205.9 393.1 L1200.6 400.8 L1194.1 406.9 L1186.7 411.4 L1178.4 414.1 L1169.6 415.0 L1160.3 414.0 L1150.9 411.2 L1141.6 406.6 L1132.5 400.4 L1124.0 392.7 L1116.2 383.6 L1109.4 373.5 L1103.6 362.6" fill="none" stroke="#c9bc95" stroke-width="1.6" opacity="0.65"/>
<path d="M1096.5 324.6 L1096.5 316.2 L1097.4 308.3 L1099.1 300.8 L1101.6 293.8 L1104.9 287.6 L1108.8 282.1 L1113.5 277.5 L1118.7 273.8 L1124.4 271.1 L1130.6 269.4 L1137.1 268.8 L1143.8 269.2 L1150.6 270.6 L1157.5 273.1 L1164.3 276.6 L1170.9 281.0 L1177.3 286.3 L1183.3 292.4 L1188.9 299.2 L1193.9 306.6 L1198.3 314.5 L1202.0 322.8 L1205.0 331.3 L1207.2 339.9 L1208.6 348.5 L1209.2 357.0 L1208.9 365.3 L1207.8 373.1 L1205.9 380.5 L1203.1 387.2 L1199.7 393.3 L1195.5 398.5 L1190.7 402.9 L1185.3 406.3 L1179.5 408.7 L1173.2 410.1 L1166.7 410.4 L1159.9 409.7 L1153.0 407.9 L1146.1 405.2" fill="none" stroke="#c9bc95" stroke-width="1.2" opacity="0.5"/>
<ellipse cx="1190.0" cy="318.0" rx="26.0" ry="40.0" transform="rotate(-24 1190.0 318.0)" fill="none" stroke="#c9bc95" stroke-width="1.2" opacity="0.7"/>
<path d="M1108.0 286.3 C1113.3 286.6 1128.5 287.2 1140.0 288.0 C1151.5 288.8 1171.1 290.5 1177.3 291.0" fill="none" stroke="#c9bc95" stroke-width="2.2" opacity="0.8" stroke-linecap="round"/>
<path d="M1118.4 370.6 C1122.3 367.2 1133.3 356.6 1142.0 350.0 C1150.7 343.4 1166.0 334.4 1170.8 331.3" fill="none" stroke="#c9bc95" stroke-width="2.6" opacity="0.8" stroke-linecap="round"/>
<path d="M1178.6 334.0 C1179.0 340.0 1180.1 357.6 1181.0 370.0 C1181.9 382.4 1183.4 402.1 1183.9 408.5" fill="none" stroke="#c9bc95" stroke-width="1.6" opacity="0.75" stroke-linecap="round"/>
<path d="M1200.9 358.0 C1199.4 362.3 1194.8 375.6 1192.0 384.0 C1189.2 392.4 1185.2 404.4 1183.9 408.5" fill="none" stroke="#c9bc95" stroke-width="2.0" opacity="0.8" stroke-linecap="round"/>
<path d="M1178.6 345.7 C1180.5 347.1 1185.2 351.9 1190.0 354.0 C1194.8 356.1 1204.5 357.3 1207.4 358.0" fill="none" stroke="#c9bc95" stroke-width="1.4" opacity="0.7" stroke-linecap="round"/>
<path d="M1150.0 290.0 C1151.3 295.0 1154.3 313.0 1158.0 320.0 C1161.7 327.0 1169.7 330.0 1172.0 332.0" fill="none" stroke="#c9bc95" stroke-width="1.3" opacity="0.6" stroke-linecap="round"/>
<path d="M1118.0 370.0 C1119.0 372.3 1122.0 380.3 1124.0 384.0 C1126.0 387.7 1129.0 390.7 1130.0 392.0" fill="none" stroke="#c9bc95" stroke-width="1.3" opacity="0.6" stroke-linecap="round"/>
<path d="M1153.8 168.6 C1155.7 173.8 1161.3 190.6 1165.0 200.0 C1168.7 209.4 1172.8 217.6 1176.0 225.0 C1179.2 232.4 1182.6 241.2 1183.9 244.5" fill="none" stroke="#c9bc95" stroke-width="1.8" opacity="0.35" stroke-linecap="round"/>
<path d="M1181.0 155.5 C1185.0 162.1 1198.7 183.4 1205.0 195.0 C1211.3 206.6 1215.3 215.9 1219.0 225.0 C1222.7 234.1 1225.7 245.6 1227.0 249.7" fill="none" stroke="#c9bc95" stroke-width="1.8" opacity="0.35" stroke-linecap="round"/>
<path d="M1155.0 236.6 C1157.5 234.2 1164.5 225.9 1170.0 222.0 C1175.5 218.1 1180.5 214.5 1187.8 213.0 C1195.1 211.5 1206.1 211.5 1214.0 213.0 C1221.9 214.5 1229.0 218.3 1235.0 222.0 C1241.0 225.7 1247.5 233.1 1250.0 235.3" fill="none" stroke="#c9bc95" stroke-width="1.3" opacity="0.3" stroke-linecap="round"/>
<path d="M1105.3 253.6 C1105.4 248.8 1104.7 233.3 1106.0 225.0 C1107.3 216.7 1110.2 210.6 1113.2 203.9 C1116.2 197.2 1119.9 190.9 1124.0 185.0 C1128.1 179.1 1135.7 171.3 1138.0 168.6" fill="none" stroke="#c9bc95" stroke-width="1.4" opacity="0.3" stroke-linecap="round"/>
<path d="M1285.5 271.9 C1287.8 270.7 1294.5 266.8 1299.0 264.5 C1303.5 262.2 1310.2 259.2 1312.4 258.1" fill="none" stroke="#c9bc95" stroke-width="1.7" opacity="0.7" stroke-linecap="round"/>
<path d="M1286.5 274.5 C1288.8 273.3 1295.5 269.8 1300.0 267.5 C1304.5 265.2 1311.2 262.1 1313.4 261.0" fill="none" stroke="#c9bc95" stroke-width="1.4" opacity="0.6" stroke-linecap="round"/>
<path d="M1313.0 260.0 C1311.8 263.7 1308.6 275.7 1306.0 282.0 C1303.4 288.3 1298.8 295.3 1297.3 298.0" fill="none" stroke="#c9bc95" stroke-width="1.5" opacity="0.6" stroke-linecap="round"/>
<path d="M1226.0 230.0 C1226.3 234.3 1229.3 247.3 1228.0 256.0 C1226.7 264.7 1219.7 277.7 1218.0 282.0" fill="none" stroke="#c9bc95" stroke-width="1.3" opacity="0.3" stroke-linecap="round"/>
<path d="M1245.0 275.0 C1247.8 278.8 1256.2 293.8 1262.0 298.0 C1267.8 302.2 1276.3 303.7 1280.0 300.0 C1283.7 296.3 1283.3 280.0 1284.0 276.0" fill="none" stroke="#c9bc95" stroke-width="1.2" opacity="0.25" stroke-linecap="round"/>
<path d="M1280.0 277.0 C1278.3 280.8 1275.0 292.0 1270.0 300.0 C1265.0 308.0 1254.5 319.2 1250.0 325.0 C1245.5 330.8 1244.2 333.3 1243.0 335.0" fill="none" stroke="#c9bc95" stroke-width="1.4" opacity="0.35" stroke-linecap="round"/>
<path d="M1243.0 336.0 C1246.7 335.0 1258.3 333.5 1265.0 330.0 C1271.7 326.5 1278.5 320.0 1283.0 315.0 C1287.5 310.0 1290.5 302.5 1292.0 300.0" fill="none" stroke="#c9bc95" stroke-width="1.3" opacity="0.3" stroke-linecap="round"/>
<path d="M1243.0 387.0 C1247.5 389.5 1261.2 396.5 1270.0 402.0 C1278.8 407.5 1287.9 414.4 1296.0 420.0 C1304.1 425.6 1314.8 433.1 1318.6 435.7" fill="none" stroke="#c9bc95" stroke-width="1.5" opacity="0.5" stroke-linecap="round"/>
<path d="M1230.0 423.0 C1234.2 424.5 1245.5 427.7 1255.0 432.0 C1264.5 436.3 1281.7 445.8 1287.0 448.6" fill="none" stroke="#c9bc95" stroke-width="1.3" opacity="0.4" stroke-linecap="round"/>
<path d="M1320.0 434.3 C1316.7 436.9 1307.2 444.8 1300.0 450.0 C1292.8 455.2 1280.8 463.1 1277.0 465.7" fill="none" stroke="#c9bc95" stroke-width="1.8" opacity="0.7" stroke-linecap="round"/>
<path d="M1322.0 437.5 C1318.7 440.1 1309.2 447.8 1302.0 453.0 C1294.8 458.2 1282.8 465.9 1279.0 468.5" fill="none" stroke="#c9bc95" stroke-width="1.4" opacity="0.55" stroke-linecap="round"/>
<path d="M1140.0 432.0 C1148.3 433.3 1173.3 439.3 1190.0 440.0 C1206.7 440.7 1223.3 439.3 1240.0 436.0 C1256.7 432.7 1281.7 422.7 1290.0 420.0" fill="none" stroke="#c9bc95" stroke-width="1.2" opacity="0.35" stroke-linecap="round"/>
<path d="M1125.0 418.0 C1132.5 423.7 1152.5 443.3 1170.0 452.0 C1187.5 460.7 1210.8 467.7 1230.0 470.0 C1249.2 472.3 1275.8 466.7 1285.0 466.0" fill="none" stroke="#c9bc95" stroke-width="1.3" opacity="0.4" stroke-linecap="round"/>
<path d="M1078.0 300.0 C1080.3 299.0 1086.7 295.5 1092.0 294.0 C1097.3 292.5 1107.0 291.5 1110.0 291.0" fill="none" stroke="#c9bc95" stroke-width="1.3" opacity="0.5" stroke-linecap="round"/>
</g>
</svg>
<div class="abs" style="left:885.5px;top:7px;width:1px;height:46px;background:#f0f0f0"></div>
<div class="abs" style="left:938.5px;top:7px;width:1px;height:46px;background:#f0f0f0"></div>
<div class="abs" style="left:1198.5px;top:7px;width:1px;height:46px;background:#f0f0f0"></div>
<div class="abs" style="left:1246px;top:7px;width:1px;height:46px;background:#f0f0f0"></div>
<div class="abs" style="left:1299.5px;top:7px;width:1px;height:46px;background:#f0f0f0"></div>
<div class="abs" style="left:1352.3px;top:7px;width:1px;height:46px;background:#f0f0f0"></div>
<div class="abs" style="left:991px;top:7px;width:46px;height:46.5px;border:1px solid #b9dcf1;border-radius:5px;background:#f8f8f8"></div>
<div class="abs" style="left:1147px;top:7px;width:46px;height:46.5px;border:1px solid #b9dcf1;border-radius:5px;background:#f8f8f8"></div>
<svg style="left:0;top:0;will-change:transform" width="1847" height="62" viewBox="0 0 1847 62"><path d="M909.4 22.4 L917.0 26.8 L909.4 31.2 L901.8 26.8Z" fill="#e3e3e3"/><path d="M901.8 26.8 L909.4 31.2 L909.4 39.6 L901.8 35.0Z" fill="#8f8f8f"/><path d="M909.4 31.2 L917.0 26.8 L917.0 35.0 L909.4 39.6Z" fill="#cdcdcd"/><path d="M909.4 22.4 L917.0 26.8 L917.0 35.0 L909.4 39.6 L901.8 35.0 L901.8 26.8Z M901.8 26.8 L909.4 31.2 L917.0 26.8 M909.4 31.2 L909.4 39.6" fill="none" stroke="#5a5a5a" stroke-width="0.9" stroke-linejoin="round"/><path d="M921.5 46.3 H925.6 V42.2" fill="none" stroke="#999" stroke-width="1"/><path d="M962.0 22.4 L969.6 26.8 L962.0 31.2 L954.4 26.8Z" fill="#d9ecf7"/><path d="M954.4 26.8 L962.0 31.2 L962.0 39.6 L954.4 35.0Z" fill="#b9dbf0"/><path d="M962.0 31.2 L969.6 26.8 L969.6 35.0 L962.0 39.6Z" fill="#cfe6f4"/><path d="M962.0 22.4 L969.6 26.8 L969.6 35.0 L962.0 39.6 L954.4 35.0 L954.4 26.8Z M954.4 26.8 L962.0 31.2 L969.6 26.8 M962.0 31.2 L962.0 39.6" fill="none" stroke="#a9a9a9" stroke-width="0.9"/><circle cx="962.0" cy="22.4" r="1.7" fill="#9a9a9a"/><circle cx="954.4" cy="26.8" r="1.7" fill="#9a9a9a"/><circle cx="969.6" cy="26.8" r="1.7" fill="#9a9a9a"/><circle cx="962.0" cy="31.2" r="1.7" fill="#9a9a9a"/><circle cx="954.4" cy="35.0" r="1.7" fill="#9a9a9a"/><circle cx="969.6" cy="35.0" r="1.7" fill="#9a9a9a"/><circle cx="962.0" cy="39.6" r="1.7" fill="#9a9a9a"/><circle cx="956.7" cy="31.5" r="0.6" fill="#5aa9dc"/><circle cx="956.7" cy="34.0" r="0.6" fill="#5aa9dc"/><circle cx="956.7" cy="36.5" r="0.6" fill="#5aa9dc"/><circle cx="958.8" cy="32.7" r="0.6" fill="#5aa9dc"/><circle cx="958.8" cy="35.2" r="0.6" fill="#5aa9dc"/><circle cx="958.8" cy="37.7" r="0.6" fill="#5aa9dc"/><path d="M1014.2 23.2 L1021.3 27.3 L1021.3 34.9 L1014.2 39.2 L1007.1 34.9 L1007.1 27.3Z" fill="#fff"/><path d="M1007.1 27.3 L1014.2 31.4 L1014.2 39.2 L1007.1 34.9Z" fill="#29abe2"/><path d="M1014.2 23.2 L1021.3 27.3 L1021.3 34.9 L1014.2 39.2 L1007.1 34.9 L1007.1 27.3Z M1007.1 27.3 L1014.2 31.4 L1021.3 27.3 M1014.2 31.4 L1014.2 39.2" fill="none" stroke="#151515" stroke-width="1.15"/><circle cx="1014.2" cy="23.2" r="1.7" fill="#151515"/><circle cx="1007.1" cy="27.3" r="1.7" fill="#151515"/><circle cx="1021.3" cy="27.3" r="1.7" fill="#151515"/><circle cx="1014.2" cy="31.4" r="1.7" fill="#151515"/><circle cx="1007.1" cy="34.9" r="1.7" fill="#151515"/><circle cx="1021.3" cy="34.9" r="1.7" fill="#151515"/><circle cx="1014.2" cy="39.2" r="1.7" fill="#151515"/><path d="M1065.0 22.4 L1072.6 26.8 L1072.6 35.0 L1065.0 39.6 L1057.4 35.0 L1057.4 26.8Z M1057.4 26.8 L1065.0 31.2 L1072.6 26.8 M1065.0 31.2 L1065.0 39.6" fill="none" stroke="#b5d9ef" stroke-width="1"/><circle cx="1065.0" cy="22.4" r="1.8" fill="#a2a2a2"/><circle cx="1057.4" cy="26.8" r="1.8" fill="#a2a2a2"/><circle cx="1072.6" cy="26.8" r="1.8" fill="#a2a2a2"/><circle cx="1065.0" cy="31.2" r="1.8" fill="#a2a2a2"/><circle cx="1057.4" cy="35.0" r="1.8" fill="#a2a2a2"/><circle cx="1072.6" cy="35.0" r="1.8" fill="#a2a2a2"/><circle cx="1065.0" cy="39.6" r="1.8" fill="#a2a2a2"/><path d="M1117.0 22.4 L1124.6 26.8 L1124.6 35.0 L1117.0 39.6 L1109.4 35.0 L1109.4 26.8Z M1109.4 26.8 L1117.0 31.2 L1124.6 26.8 M1117.0 31.2 L1117.0 39.6" fill="none" stroke="#aaaaaa" stroke-width="1"/><circle cx="1117.0" cy="22.4" r="1.9" fill="#b5d9ef"/><circle cx="1109.4" cy="26.8" r="1.9" fill="#b5d9ef"/><circle cx="1124.6" cy="26.8" r="1.9" fill="#b5d9ef"/><circle cx="1117.0" cy="31.2" r="1.9" fill="#b5d9ef"/><circle cx="1109.4" cy="35.0" r="1.9" fill="#b5d9ef"/><circle cx="1124.6" cy="35.0" r="1.9" fill="#b5d9ef"/><circle cx="1117.0" cy="39.6" r="1.9" fill="#b5d9ef"/><circle cx="1170.4" cy="25.1" r="5.1" fill="#2e3a3f"/><path d="M1170.4 30 V39" stroke="#2e3a3f" stroke-width="1.2"/><circle cx="1170.4" cy="39.8" r="1.7" fill="#2e3a3f"/><rect x="1215" y="23.7" width="13.6" height="10.2" fill="none" stroke="#151515" stroke-width="1.5" stroke-dasharray="3.6 2"/><path d="M1226.2 32 L1226.2 40.6 L1228.4 38.6 L1229.9 41.6 L1231.1 41 L1229.7 38.1 L1232.4 37.9Z" fill="#151515"/><path d="M1271.8 22.7 L1278.5 26.6 L1278.5 33.8 L1271.8 37.9 L1265.1 33.8 L1265.1 26.6Z M1265.1 26.6 L1271.8 30.5 L1278.5 26.6 M1271.8 30.5 L1271.8 37.9" fill="#ededed" stroke="#bdbdbd" stroke-width="0.9"/><path d="M1267.3 27.9 L1267.3 35.1 M1274.0 29.2 L1274.0 36.5 M1265.1 29.0 L1271.8 32.9 L1278.5 29.0" fill="none" stroke="#c4c4c4" stroke-width="0.7"/><path d="M1269.5 29.2 L1269.5 36.5 M1276.2 27.9 L1276.2 35.2 M1265.1 31.4 L1271.8 35.4 L1278.5 31.4" fill="none" stroke="#c4c4c4" stroke-width="0.7"/><circle cx="1271.8" cy="22.7" r="1.3" fill="#c2c2c2"/><circle cx="1265.1" cy="26.6" r="1.3" fill="#c2c2c2"/><circle cx="1278.5" cy="26.6" r="1.3" fill="#c2c2c2"/><circle cx="1265.1" cy="33.8" r="1.3" fill="#c2c2c2"/><circle cx="1278.5" cy="33.8" r="1.3" fill="#c2c2c2"/><circle cx="1271.8" cy="37.9" r="1.3" fill="#c2c2c2"/><g fill="none" stroke="#4d4d4d" stroke-width="1" stroke-linejoin="round" stroke-linecap="round"><path d="M1320.3 33.7 L1313 37.7 L1317.3 40.4 L1325.4 35.8Z" fill="#777"/><path d="M1324.9 34.9 V29.5 Q1325.3 25.2 1332.2 23.4 L1332.5 32 L1325.4 35.6Z" fill="#f7f7f7"/><path d="M1320.3 33.7 V28.2 Q1320.5 23 1327.6 21.2 L1332.2 23.4 Q1325.3 25.2 1324.9 29.5 V34.9Z" fill="#f1f1f1"/><path d="M1320.3 30.4 L1324.8 31.6"/><path d="M1332.4 23.8 V31.8" stroke-width="1.6" stroke="#6a6a6a"/><path d="M1315.4 37.6 L1318.8 39.2 M1317.6 36.4 L1321 38" stroke="#d0d0d0" stroke-width="0.7"/></g><path d="M1367.6 38.6 L1381.2 24.6" stroke="#c3c3c3" stroke-width="5.4" stroke-linecap="round" fill="none"/><path d="M1367.6 38.6 L1381.2 24.6" stroke="#f5f5f5" stroke-width="3.3" stroke-linecap="round" fill="none"/><g fill="none" stroke="#c3c3c3" stroke-width="1.1"><path d="M1375.2 27.6 L1378.6 31"/><path d="M1366.3 25.8 H1371.7 M1369 23.1 V28.5 M1372.6 22.2 H1376.6 M1374.6 20.2 V24.2"/></g><text x="1377.6" y="39.3" font-family="Liberation Sans, sans-serif" font-size="9.6" fill="#bdbdbd">AI</text><path d="M1388.2 46.3 H1392.3 V42.2" fill="none" stroke="#bbb" stroke-width="1"/></svg>
<div class="panel" style="left:2px;top:3px;width:295px;height:702px"></div>
<div class="panel" style="left:2px;top:710.5px;width:295px;height:42.5px"></div>
<div class="hl" style="left:3px;top:47px;width:293px;height:1px"></div>
<div class="abs" style="left:3px;top:527px;width:293px;height:32px;background:#ddecf5;border-top:1px dashed #a9d0e6;border-bottom:1px dashed #a9d0e6"></div>
<div class="vl" style="left:24px;top:91px;height:9px"></div>
<div class="vl" style="left:53px;top:125px;height:553px"></div>
<div class="hln" style="left:53px;top:140px;width:7px"></div>
<div class="hln" style="left:53px;top:174px;width:7px"></div>
<div class="hln" style="left:53px;top:442px;width:7px"></div>
<div class="hln" style="left:53px;top:678px;width:7px"></div>
<div class="vl" style="left:82px;top:226px;height:15px"></div>
<div class="hln" style="left:82px;top:241px;width:7px"></div>
<div class="vl" style="left:82px;top:325px;height:50px"></div>
<div class="hln" style="left:82px;top:341px;width:7px"></div>
<div class="hln" style="left:82px;top:375px;width:7px"></div>
<div class="vl" style="left:82px;top:493px;height:117px"></div>
<div class="hln" style="left:82px;top:577px;width:7px"></div>
<div class="hln" style="left:82px;top:610px;width:7px"></div>
<div class="vl" style="left:111px;top:527px;height:17px"></div>
<div class="hln" style="left:111px;top:544px;width:8px"></div>
<svg style="left:20px;top:18px" width="8" height="14" viewBox="0 0 8 14"><path d="M1 1 L7 7 L1 13" fill="none" stroke="#5a5a5a" stroke-width="1.15"/></svg>
<svg style="left:17.5px;top:64.5px" width="13" height="8" viewBox="0 0 13 8"><path d="M1 1 L6.5 7 L12 1" fill="none" stroke="#5a5a5a" stroke-width="1.15"/></svg>
<svg style="left:44px;top:15.5px" width="18" height="19" viewBox="0 0 18 19"><path d="M9 0.20000000000000018 L13.5 2.6 L9 5.0 L4.5 2.6Z" fill="#e6e6e6"/><path d="M4.5 2.6 L9 5.0 L9 10.2 L4.5 7.800000000000001Z" fill="#b9b9b9"/><path d="M13.5 2.6 L9 5.0 L9 10.2 L13.5 7.800000000000001Z" fill="#cfcfcf"/><path d="M4.5 8 L9.0 10.4 L4.5 12.8 L0.0 10.4Z" fill="#e6e6e6"/><path d="M0.0 10.4 L4.5 12.8 L4.5 18 L0.0 15.6Z" fill="#b9b9b9"/><path d="M9.0 10.4 L4.5 12.8 L4.5 18 L9.0 15.6Z" fill="#cfcfcf"/><path d="M13.5 8 L18.0 10.4 L13.5 12.8 L9.0 10.4Z" fill="#e6e6e6"/><path d="M9.0 10.4 L13.5 12.8 L13.5 18 L9.0 15.6Z" fill="#b9b9b9"/><path d="M18.0 10.4 L13.5 12.8 L13.5 18 L18.0 15.6Z" fill="#cfcfcf"/></svg>
<svg style="left:44px;top:59.5px" width="18" height="19" viewBox="0 0 18 19"><path d="M9 0.20000000000000018 L13.5 2.6 L9 5.0 L4.5 2.6Z" fill="#d9b04a"/><path d="M4.5 2.6 L9 5.0 L9 10.2 L4.5 7.800000000000001Z" fill="#1f78b4"/><path d="M13.5 2.6 L9 5.0 L9 10.2 L13.5 7.800000000000001Z" fill="#c9a03a"/><path d="M4.5 8 L9.0 10.4 L4.5 12.8 L0.0 10.4Z" fill="#d9b04a"/><path d="M0.0 10.4 L4.5 12.8 L4.5 18 L0.0 15.6Z" fill="#1f78b4"/><path d="M9.0 10.4 L4.5 12.8 L4.5 18 L9.0 15.6Z" fill="#c9a03a"/><path d="M13.5 8 L18.0 10.4 L13.5 12.8 L9.0 10.4Z" fill="#d9b04a"/><path d="M9.0 10.4 L13.5 12.8 L13.5 18 L9.0 15.6Z" fill="#1f78b4"/><path d="M18.0 10.4 L13.5 12.8 L13.5 18 L18.0 15.6Z" fill="#c9a03a"/></svg>
<span class="t " style="left:70px;top:15.8px;font-size:15px;line-height:18px;font-weight:400;color:#2c383d;letter-spacing:-0.28px;-webkit-text-stroke:0.45px #2c383d;">GEOMETRIES (2)</span>
<span class="t " style="left:70px;top:59.8px;font-size:15px;line-height:18px;font-weight:400;color:#2c383d;letter-spacing:0.31px;-webkit-text-stroke:0.45px #2c383d;">SIMULATIONS</span>
<div class="plus" style="left:263px;top:15.600000000000001px"><i></i><b></b></div>
<div class="plus" style="left:263px;top:59.3px"><i></i><b></b></div>
<div class="exp" style="left:18.0px;top:100.0px"><i></i></div>
<svg style="left:0;top:0" width="80" height="125" viewBox="0 0 80 125"><g fill="none" stroke="#6c6c6c" stroke-width="1.3" stroke-linecap="round" stroke-linejoin="round"><path d="M56.49 102.53 A7.1 7.1 0 1 0 57.17 110.23"/><path d="M47.52 104.95 A3.9 3.9 0 1 0 54.09 109.14"/><path d="M54.09 109.14 Q56.2 106.6 57 105.5 L62.2 103.8 M59.9 101.6 L62.4 103.7 L60.9 106.6"/></g><circle cx="50.9" cy="106.9" r="2" fill="#6c6c6c"/></svg>
<span class="t " style="left:70px;top:98.1px;font-size:15px;line-height:18px;font-weight:400;color:#333d42;letter-spacing:0.53px;">Multi-purpose</span>
<svg style="left:0;top:0" width="100" height="160" viewBox="0 0 100 160"><path d="M84.7 135.6 L88.6 134 L88.6 146.2 L79.6 149.7 L79.6 143.5 L84.7 141.1Z" fill="#d9d9d9"/><path d="M80.4 133.6 L84.3 132.2 L88.6 134 L84.7 135.6Z" fill="#ececec"/><path d="M80.4 133.6 L84.7 135.6 L84.7 141.1 L80.4 139.9Z" fill="#9e9e9e"/><path d="M75.3 142.3 L80.4 139.9 L84.7 141.1 L79.6 143.5Z" fill="#e6e6e6"/><path d="M75.3 142.3 L79.6 143.5 L79.6 149.7 L75.3 147.8Z" fill="#b4b4b4"/><circle cx="91.5" cy="149.3" r="4.8" fill="#17884a" stroke="#fff" stroke-width="0.7"/><path d="M89.3 149.4 L90.9 150.9 L93.7 147.8" fill="none" stroke="#fff" stroke-width="1.4" stroke-linecap="round" stroke-linejoin="round"/></svg>
<span class="t " style="left:99px;top:131.8px;font-size:15px;line-height:18px;font-weight:400;color:#333d42;letter-spacing:0.42px;">Geometry</span>
<svg class="chk" style="left:75px;top:167px" viewBox="0 0 14 14"><circle cx="7" cy="7" r="7" fill="#17884a"/><path d="M3.7 7.3 L6.1 9.6 L10.4 4.9" fill="none" stroke="#fff" stroke-width="1.9" stroke-linecap="round" stroke-linejoin="round"/></svg>
<span class="t " style="left:99px;top:165.4px;font-size:15px;line-height:18px;font-weight:400;color:#333d42;letter-spacing:0.43px;">Model</span>
<div class="exp" style="left:47.0px;top:201.0px"><i></i></div>
<span class="t " style="left:70.3px;top:199.1px;font-size:15px;line-height:18px;font-weight:400;color:#333d42;letter-spacing:0.43px;">Materials</span>
<div class="plus" style="left:263px;top:198.5px"><i></i><b></b></div>
<svg class="chk" style="left:104px;top:233.7px" viewBox="0 0 14 14"><circle cx="7" cy="7" r="7" fill="#17884a"/><path d="M3.7 7.3 L6.1 9.6 L10.4 4.9" fill="none" stroke="#fff" stroke-width="1.9" stroke-linecap="round" stroke-linejoin="round"/></svg>
<span class="t " style="left:128px;top:232.3px;font-size:15px;line-height:18px;font-weight:400;color:#333d42;letter-spacing:0.63px;">Water</span>
<div class="exp" style="left:47.0px;top:268.0px"><i></i><b></b></div>
<svg class="chk" style="left:75px;top:267.3px" viewBox="0 0 14 14"><circle cx="7" cy="7" r="7" fill="#17884a"/><path d="M3.7 7.3 L6.1 9.6 L10.4 4.9" fill="none" stroke="#fff" stroke-width="1.9" stroke-linecap="round" stroke-linejoin="round"/></svg>
<span class="t " style="left:99px;top:265.9px;font-size:15px;line-height:18px;font-weight:400;color:#333d42;letter-spacing:0.35px;">Initial conditions</span>
<div class="exp" style="left:47.0px;top:301.5px"><i></i></div>
<span class="t " style="left:70px;top:299.6px;font-size:15px;line-height:18px;font-weight:400;color:#333d42;letter-spacing:0.27px;">Boundary conditions</span>
<div class="plus" style="left:263px;top:299px"><i></i><b></b></div>
<svg class="chk" style="left:104px;top:334.5px" viewBox="0 0 14 14"><circle cx="7" cy="7" r="7" fill="#17884a"/><path d="M3.7 7.3 L6.1 9.6 L10.4 4.9" fill="none" stroke="#fff" stroke-width="1.9" stroke-linecap="round" stroke-linejoin="round"/></svg>
<span class="t " style="left:128px;top:333.1px;font-size:15px;line-height:18px;font-weight:400;color:#333d42;letter-spacing:0.32px;">Velocity inlet 1</span>
<svg class="chk" style="left:104px;top:368.2px" viewBox="0 0 14 14"><circle cx="7" cy="7" r="7" fill="#17884a"/><path d="M3.7 7.3 L6.1 9.6 L10.4 4.9" fill="none" stroke="#fff" stroke-width="1.9" stroke-linecap="round" stroke-linejoin="round"/></svg>
<span class="t " style="left:128px;top:366.8px;font-size:15px;line-height:18px;font-weight:400;color:#333d42;letter-spacing:0.15px;">Pressure outlet 2</span>
<div class="exp" style="left:47.0px;top:402.0px"><i></i></div>
<span class="t " style="left:70px;top:400.2px;font-size:15px;line-height:18px;font-weight:400;color:#333d42;letter-spacing:0.06px;">Advanced concepts</span>
<svg class="chk" style="left:75px;top:435.3px" viewBox="0 0 14 14"><circle cx="7" cy="7" r="7" fill="#17884a"/><path d="M3.7 7.3 L6.1 9.6 L10.4 4.9" fill="none" stroke="#fff" stroke-width="1.9" stroke-linecap="round" stroke-linejoin="round"/></svg>
<span class="t " style="left:99px;top:433.8px;font-size:15px;line-height:18px;font-weight:400;color:#333d42;letter-spacing:0.26px;">Simulation control</span>
<div class="exp" style="left:47.0px;top:470.0px"><i></i></div>
<span class="t " style="left:70px;top:467.6px;font-size:15px;line-height:18px;font-weight:400;color:#333d42;letter-spacing:0.27px;">Result control</span>
<div class="exp" style="left:75.3px;top:503.7px"><i></i></div>
<span class="t " style="left:99px;top:501.2px;font-size:15px;line-height:18px;font-weight:400;color:#333d42;letter-spacing:-0.05px;">Forces and moments</span>
<div class="plus" style="left:263px;top:501px"><i></i><b></b></div>
<svg class="chk" style="left:133px;top:536.5px" viewBox="0 0 14 14"><circle cx="7" cy="7" r="7" fill="#17884a"/><path d="M3.7 7.3 L6.1 9.6 L10.4 4.9" fill="none" stroke="#fff" stroke-width="1.9" stroke-linecap="round" stroke-linejoin="round"/></svg>
<span class="t " style="left:157px;top:535.0px;font-size:15px;line-height:18px;font-weight:400;color:#333d42;letter-spacing:-0.18px;">Forces and mom...</span>
<span class="t " style="left:99px;top:568.2px;font-size:15px;line-height:18px;font-weight:400;color:#333d42;letter-spacing:-0.05px;">Surface data</span>
<div class="plus" style="left:263px;top:568px"><i></i><b></b></div>
<span class="t " style="left:99px;top:601.8px;font-size:15px;line-height:18px;font-weight:400;color:#333d42;letter-spacing:0.19px;">Probe points</span>
<div class="plus" style="left:263px;top:601.5px"><i></i><b></b></div>
<div class="exp" style="left:47.0px;top:637.5px"><i></i><b></b></div>
<svg class="chk" style="left:75px;top:637.2px" viewBox="0 0 14 14"><circle cx="7" cy="7" r="7" fill="#17884a"/><path d="M3.7 7.3 L6.1 9.6 L10.4 4.9" fill="none" stroke="#fff" stroke-width="1.9" stroke-linecap="round" stroke-linejoin="round"/></svg>
<span class="t " style="left:99px;top:635.7px;font-size:15px;line-height:18px;font-weight:400;color:#333d42;letter-spacing:0.15px;">Mesh settings</span>
<svg style="left:75px;top:670.5px" width="14" height="14" viewBox="0 0 14 14"><circle cx="7" cy="7" r="5.4" fill="#fff" stroke="#e0283c" stroke-width="3"/></svg>
<span class="t " style="left:99px;top:669.3px;font-size:15px;line-height:18px;font-weight:400;color:#333d42;letter-spacing:0.03px;">Simulation Runs</span>
<div class="plus" style="left:263px;top:668.8px"><i></i><b></b></div>
<span class="t " style="left:15px;top:720.2px;font-size:19px;line-height:23px;font-weight:400;color:#2c383d;letter-spacing:-0.66px;-webkit-text-stroke:0.57px #2c383d;">Job status</span>
<svg style="left:0;top:0" width="300" height="540" viewBox="0 0 300 540"><rect x="38.45" y="463.45" width="34" height="26.1" fill="none" stroke="#4a86e8" stroke-width="2.5"/><circle cx="272.1" cy="510.7" r="16.55" fill="none" stroke="#4a86e8" stroke-width="2.5"/></svg>
<div class="badge" style="left:34px;top:406px;width:40px;height:40px;line-height:40px">1</div>
<div class="badge" style="left:250px;top:446px;width:40px;height:40px;line-height:40px">2</div>
<div class="panel" style="left:306px;top:3px;width:420px;height:449px;box-shadow:0 1px 6px rgba(0,0,0,.10)"></div>
<div class="hl" style="left:307px;top:56px;width:418px;height:1px"></div>
<span class="t " style="left:326.5px;top:19.5px;font-size:18.5px;line-height:22px;font-weight:400;color:#2c383d;letter-spacing:-0.54px;-webkit-text-stroke:0.55px #2c383d;">Forces and moments 1</span>
<div class="abs" style="left:635px;top:11px;width:39px;height:38px;background:#0a72a9;border-radius:3px"></div>
<svg style="left:646px;top:22.5px" width="17" height="14" viewBox="0 0 17 14"><path d="M1.5 7.2 L6.2 11.8 L15.6 1.8" fill="none" stroke="#fff" stroke-width="1.7"/></svg>
<div class="abs" style="left:679.5px;top:11px;width:37px;height:38px;background:#fff;border:1px solid #dedede;border-radius:4px"></div>
<svg style="left:692px;top:24px" width="12" height="12" viewBox="0 0 12 12"><path d="M1 1 L11 11 M11 1 L1 11" fill="none" stroke="#666" stroke-width="1.1"/></svg>
<span class="t " style="left:322.3px;top:76.6px;font-size:15px;line-height:18px;font-weight:400;color:#333d42;letter-spacing:-0.07px;">Forces and moments</span>
<div class="abs" style="left:555px;top:76px;width:137.5px;height:20px;overflow:hidden"><span class="t " style="left:0px;top:0.6px;font-size:15px;line-height:18px;font-weight:400;color:#9a9ea0;letter-spacing:0.12px;">Forces and moments</span></div>
<svg style="left:697.0px;top:83.0px" width="9" height="6" viewBox="0 0 9 6"><path d="M0.6 0.7 L4.5 4.8 L8.4 0.7" fill="none" stroke="#888" stroke-width="1.1"/></svg>
<div class="hl" style="left:550px;top:104px;width:161px;height:1px;background:#e0e0e0"></div>
<svg style="left:321.8px;top:135.0px" width="9" height="6" viewBox="0 0 9 6"><path d="M0.6 0.7 L4.5 4.8 L8.4 0.7" fill="none" stroke="#555" stroke-width="1.1"/></svg>
<span class="t " style="left:340.6px;top:128.3px;font-size:15px;line-height:18px;font-weight:400;color:#2c383d;letter-spacing:0.54px;-webkit-text-stroke:0.45px #2c383d;">Center of rotation</span>
<div class="abs" style="left:645px;top:121px;width:66px;height:34px;background:#fff;border:1px solid #dedede;border-radius:4px"></div>
<div class="abs" style="left:677px;top:122px;width:1px;height:32px;background:#dedede"></div>
<div class="abs" style="left:658.7px;top:135.7px;width:5px;height:5px;border-radius:50%;background:#6d6d6d"></div>
<svg style="left:687px;top:131px" width="14" height="15" viewBox="0 0 14 15"><path d="M6.5 1 L11.5 3.6 L6 6.4 L1 6.6Z" fill="#c9c9c9"/><path d="M1 6.6 L6 6.4 L11.5 11.2 L7.5 13.5Z" fill="#9c9c9c"/><path d="M6 6.4 L11.5 3.6 L11.5 11.2Z" fill="#dcdcdc"/></svg>
<span class="t " style="left:338.6px;top:176.7px;font-size:15px;line-height:18px;font-weight:400;color:#333d42;letter-spacing:0.00px;">x</span>
<span class="t " style="left:555px;top:176.7px;font-size:16px;line-height:19px;font-weight:400;color:#333d42;letter-spacing:0.49px;">0</span>
<span class="t " style="left:679.4px;top:176.9px;font-size:15px;line-height:18px;font-weight:400;color:#333d42;letter-spacing:-0.50px;">m</span>
<svg style="left:697.0px;top:183.09999999999997px" width="9" height="6" viewBox="0 0 9 6"><path d="M0.6 0.7 L4.5 4.8 L8.4 0.7" fill="none" stroke="#666" stroke-width="1.1"/></svg>
<div class="hl" style="left:550px;top:204px;width:110px;height:1px;background:#e0e0e0"></div>
<div class="hl" style="left:674px;top:204px;width:37px;height:1px;background:#e0e0e0"></div>
<span class="t " style="left:338.6px;top:219.7px;font-size:15px;line-height:18px;font-weight:400;color:#333d42;letter-spacing:0.00px;">y</span>
<span class="t " style="left:555px;top:219.7px;font-size:16px;line-height:19px;font-weight:400;color:#333d42;letter-spacing:0.49px;">0</span>
<span class="t " style="left:679.4px;top:219.9px;font-size:15px;line-height:18px;font-weight:400;color:#333d42;letter-spacing:-0.50px;">m</span>
<svg style="left:697.0px;top:226.09999999999997px" width="9" height="6" viewBox="0 0 9 6"><path d="M0.6 0.7 L4.5 4.8 L8.4 0.7" fill="none" stroke="#666" stroke-width="1.1"/></svg>
<div class="hl" style="left:550px;top:247px;width:110px;height:1px;background:#e0e0e0"></div>
<div class="hl" style="left:674px;top:247px;width:37px;height:1px;background:#e0e0e0"></div>
<span class="t " style="left:338.6px;top:262.7px;font-size:15px;line-height:18px;font-weight:400;color:#333d42;letter-spacing:0.00px;">z</span>
<span class="t " style="left:555px;top:262.7px;font-size:16px;line-height:19px;font-weight:400;color:#333d42;letter-spacing:0.49px;">0</span>
<span class="t " style="left:679.4px;top:262.9px;font-size:15px;line-height:18px;font-weight:400;color:#333d42;letter-spacing:-0.50px;">m</span>
<svg style="left:697.0px;top:269.09999999999997px" width="9" height="6" viewBox="0 0 9 6"><path d="M0.6 0.7 L4.5 4.8 L8.4 0.7" fill="none" stroke="#666" stroke-width="1.1"/></svg>
<div class="hl" style="left:550px;top:290px;width:110px;height:1px;background:#e0e0e0"></div>
<div class="hl" style="left:674px;top:290px;width:37px;height:1px;background:#e0e0e0"></div>
<span class="t " style="left:322.3px;top:314.2px;font-size:15px;line-height:18px;font-weight:400;color:#2c383d;letter-spacing:-0.15px;-webkit-text-stroke:0.45px #2c383d;">Assigned Faces</span>
<span class="t " style="left:432.3px;top:314.2px;font-size:15px;line-height:18px;font-weight:400;color:#5a6266;letter-spacing:0.13px;">(48)</span>
<span class="t " style="left:660px;top:315.2px;font-size:13.5px;line-height:16px;font-weight:400;color:#1f7fbf;letter-spacing:-0.19px;">Clear list</span>
<div class="abs" style="left:322px;top:343px;width:389px;height:40px;background:#e7f4fc;border:1px solid #27a9e1"></div>
<span class="t " style="left:333.7px;top:353.6px;font-size:15px;line-height:18px;font-weight:400;color:#414b50;letter-spacing:0.37px;">Impeller</span>
<div class="abs" style="left:682px;top:354px;width:17.5px;height:17.5px;border:1px solid #b9bcbd;border-radius:50%;background:#fff"></div>
<svg style="left:687px;top:359px" width="8" height="8" viewBox="0 0 8 8"><path d="M0.8 0.8 L7.2 7.2 M7.2 0.8 L0.8 7.2" fill="none" stroke="#444" stroke-width="1.1"/></svg>
<div class="hl" style="left:307px;top:393px;width:418px;height:1px"></div>
<div class="abs" style="left:319px;top:403px;width:39px;height:38.5px;background:#fff;border:1px solid #dedede;border-radius:4px"></div>
<svg style="left:331px;top:413px" width="15" height="18" viewBox="0 0 15 18"><g fill="none" stroke="#555" stroke-width="1.1"><path d="M1 3.6 H14"/><path d="M5.2 3.4 V1.8 Q5.2 1 6 1 H9 Q9.8 1 9.8 1.8 V3.4"/><path d="M2.3 3.8 V15 Q2.3 17 4.2 17 H10.8 Q12.7 17 12.7 15 V3.8"/><path d="M5.3 6 V14.6 M7.5 6 V14.6 M9.7 6 V14.6"/></g></svg>
<div class="panel" style="left:1558px;top:3px;width:283px;height:362px"></div>
<div class="hl" style="left:1559px;top:157px;width:281px;height:1px"></div>
<div class="hl" style="left:1559px;top:277px;width:281px;height:1px"></div>
<div class="hl" style="left:1559px;top:320px;width:281px;height:1px"></div>
<svg style="left:1574.5px;top:20.3px" width="13" height="8" viewBox="0 0 13 8"><path d="M1 1 L6.5 7 L12 1" fill="none" stroke="#5a5a5a" stroke-width="1.15"/></svg>
<span class="t " style="left:1597.6px;top:15.3px;font-size:15px;line-height:18px;font-weight:400;color:#2c383d;letter-spacing:0.03px;-webkit-text-stroke:0.45px #2c383d;">GEOMETRY</span>
<div class="vl" style="left:1581px;top:48px;height:9px"></div>
<div class="exp" style="left:1574.3px;top:57.2px"><i></i></div>
<span class="t " style="left:1597.8px;top:54.3px;font-size:15px;line-height:18px;font-weight:400;color:#2c383d;letter-spacing:0.41px;-webkit-text-stroke:0.45px #2c383d;">Centrifugal Pump</span>
<div class="vl" style="left:1610px;top:82px;height:50px"></div>
<div class="hln" style="left:1610px;top:97px;width:6px"></div>
<div class="hln" style="left:1610px;top:131px;width:6px"></div>
<svg style="left:1629.5px;top:87px" width="18" height="20" viewBox="0 0 18 20"><path d="M9 0.5 L17.3 5 L9 9.6 L0.7 5Z" fill="#e7e7e7"/><path d="M0.7 5 L9 9.6 L9 19.6 L0.7 15Z" fill="#8d8d8d"/><path d="M17.3 5 L9 9.6 L9 19.6 L17.3 15Z" fill="#cbcbcb"/></svg>
<span class="t " style="left:1655.9px;top:87.7px;font-size:15px;line-height:18px;font-weight:400;color:#333d42;letter-spacing:0.16px;">Volume</span>
<svg style="left:1629.5px;top:121px" width="18" height="20" viewBox="0 0 18 20"><path d="M9 0.5 L17.3 5 L9 9.6 L0.7 5Z" fill="#e7e7e7"/><path d="M0.7 5 L9 9.6 L9 19.6 L0.7 15Z" fill="#8d8d8d"/><path d="M17.3 5 L9 9.6 L9 19.6 L17.3 15Z" fill="#cbcbcb"/></svg>
<span class="t " style="left:1655.9px;top:121.5px;font-size:15px;line-height:18px;font-weight:400;color:#333d42;letter-spacing:0.09px;">MRF Rotating Zone</span>
<svg style="left:1574.5px;top:174.8px" width="13" height="8" viewBox="0 0 13 8"><path d="M1 1 L6.5 7 L12 1" fill="none" stroke="#5a5a5a" stroke-width="1.15"/></svg>
<span class="t " style="left:1597.8px;top:169.6px;font-size:15px;line-height:18px;font-weight:400;color:#2c383d;letter-spacing:-0.31px;-webkit-text-stroke:0.45px #2c383d;">SAVED SELECTIONS</span>
<div class="plus" style="left:1808px;top:169.8px"><i></i><b></b></div>
<div class="abs" style="left:1559px;top:200px;width:281px;height:34px;background:#e5f3fb"></div>
<div class="vl" style="left:1581px;top:200px;height:52px"></div>
<div class="hln" style="left:1581px;top:217px;width:6px"></div>
<div class="hln" style="left:1581px;top:251px;width:6px"></div>
<svg style="left:1600.5px;top:208.5px" width="19" height="19" viewBox="0 0 19 19"><path d="M10.5 0.5 L18 3.6 L18 14.6 L10.5 11.5Z" fill="#ececec"/><path d="M5.6 0.8 L13.3 4 L13.3 16.2 L5.6 13Z" fill="#d0d0d0"/><path d="M0.6 1.2 L9 5 L9 18 L0.6 14.2Z" fill="#8c8c8c"/></svg>
<span class="t " style="left:1627.2px;top:207.5px;font-size:15px;line-height:18px;font-weight:400;color:#2aa6de;letter-spacing:0.33px;">Impeller</span>
<svg style="left:1600.5px;top:242.5px" width="19" height="19" viewBox="0 0 19 19"><path d="M10.5 0.5 L18 3.6 L18 14.6 L10.5 11.5Z" fill="#ececec"/><path d="M5.6 0.8 L13.3 4 L13.3 16.2 L5.6 13Z" fill="#d0d0d0"/><path d="M0.6 1.2 L9 5 L9 18 L0.6 14.2Z" fill="#8c8c8c"/></svg>
<span class="t " style="left:1627.2px;top:241.4px;font-size:15px;line-height:18px;font-weight:400;color:#333d42;letter-spacing:0.14px;">Walls</span>
<span class="t " style="left:1569px;top:289.3px;font-size:15px;line-height:18px;font-weight:400;color:#2c383d;letter-spacing:0.05px;-webkit-text-stroke:0.45px #2c383d;">GEOMETRY PRIMITIVES</span>
<div class="plus" style="left:1808px;top:289.5px"><i></i><b></b></div>
<span class="t " style="left:1574px;top:333.2px;font-size:15px;line-height:18px;font-weight:400;color:#333d42;letter-spacing:-0.21px;">Show faces</span>
<div class="abs" style="left:1805px;top:337.5px;width:21px;height:10px;border-radius:5px;background:#f0f0f0;border:1px solid #dedede"></div>
<div class="abs" style="left:1796.5px;top:333.5px;width:18px;height:18px;border-radius:50%;background:#fff;border:1px solid #d2d2d2;box-shadow:0 1px 3px rgba(0,0,0,.12)"></div>
<div class="abs" style="left:1551px;top:174px;width:1px;height:19px;background:#d6d6d6"></div>
<div class="abs" style="left:1555px;top:174px;width:1px;height:19px;background:#d6d6d6"></div>
<div class="abs" style="left:299px;top:367px;width:1px;height:19px;background:#d6d6d6"></div>
<div class="abs" style="left:302px;top:367px;width:1px;height:19px;background:#d6d6d6"></div>
<div class="badge" style="left:1542.5px;top:196px;width:40px;height:40px;line-height:40px">3</div>
<div class="abs" style="left:772px;top:815.5px;width:299px;height:2px;background:#2f3f44"></div>
<div class="abs" style="left:772px;top:813px;width:1.5px;height:4px;background:#2f3f44"></div>
<div class="abs" style="left:1069.5px;top:813px;width:1.5px;height:4px;background:#2f3f44"></div>
<span class="t " style="left:902.8px;top:825.7px;font-size:14.5px;line-height:17px;font-weight:400;color:#333d42;letter-spacing:0.23px;">0.1 m</span>
<svg style="left:0;top:0" width="1847" height="840" viewBox="0 0 1847 840" pointer-events="none"><circle cx="692.3" cy="539.5" r="28.4" fill="#828282"/><g fill="none" stroke="#fff" stroke-width="1.2" stroke-linecap="round" stroke-linejoin="round"><path d="M681 530.4 H698 M695.2 527.6 L698.4 530.4 L695.2 533.2"/><path d="M681 538.8 H698 M695.2 536 L698.4 538.8 L695.2 541.6"/><path d="M681 547.3 H698 M695.2 544.5 L698.4 547.3 L695.2 550.1"/><path d="M690.6 527.5 Q692.5 523.6 697.3 523.6 Q704.8 524.6 704.8 539.5 Q704.8 554.4 697.3 555.4 Q692.5 555.4 690.6 551.3"/></g></svg>
<div class="abs" style="left:1769px;top:566.5px;width:58px;height:58px;border-radius:50%;background:#0b6ea5;box-shadow:0 2px 10px rgba(0,0,0,.16)"></div>
<svg style="left:1784px;top:581px" width="29" height="32" viewBox="0 0 29 32"><path d="M4.5 1 H22.5 Q27 1 27 5.5 V29.5 L20.6 25.4 H4.5 Q1 25.4 1 21.5 V5.5 Q1 1 4.5 1Z" fill="#fff"/><path d="M6.3 17.2 Q13.5 22.6 21 17.2" fill="none" stroke="#0b6ea5" stroke-width="1.5" stroke-linecap="round"/></svg>
<svg style="left:0;top:0;will-change:transform" width="1847" height="840" viewBox="0 0 1847 840"><path d="M1730 673.8 L1781.3 692.5 L1783 757.5 L1732 780 L1681.8 760 L1679.3 695Z" fill="#fbfbfb" fill-opacity="0.85"/><path d="M1681.8 760 L1731 740 L1783 757.5 M1731 740 L1730 673.8" fill="none" stroke="#d4d4d4" stroke-width="1" stroke-dasharray="3 3"/><path d="M1730 673.8 L1781.3 692.5 L1783 757.5 L1732 780 L1681.8 760 L1679.3 695Z M1679.3 695 L1730 713 L1781.3 692.5 M1730 713 L1732 780" fill="none" stroke="#b4b4b4" stroke-width="1.2" stroke-linejoin="round"/><text transform="translate(1708.5 757) rotate(-83) skewX(-14)" font-family="Liberation Sans, sans-serif" font-size="9" font-style="italic" fill="#a4a4a4" letter-spacing="0.2">FRONT</text><text transform="translate(1745.5 744.5) rotate(-20) skewX(-8)" font-family="Liberation Sans, sans-serif" font-size="8.8" font-style="italic" fill="#a4a4a4">RIGHT</text><text transform="translate(1720 697) rotate(-22)" font-family="Liberation Sans, sans-serif" font-size="6.5" font-style="italic" fill="#b9b9b9">TOP</text><path d="M1732.5 786.3 L1729 688" stroke="#5b95f3" stroke-width="1.2" fill="none"/><path d="M1728.7 682 L1726.4 693 L1731.4 693Z" fill="#4b8bf2"/><path d="M1732.5 786.3 L1660 760.3" stroke="#74e57f" stroke-width="1.2" fill="none"/><path d="M1653.5 758 L1662.8 763.7 L1664.4 759Z" fill="#63e06f"/><path d="M1732.5 786.3 L1805 756.3" stroke="#f47c7c" stroke-width="1.2" fill="none"/><path d="M1811.5 753.6 L1801 755.3 L1802.9 759.9Z" fill="#f26b6b"/><text x="1723.6" y="677.6" font-family="Liberation Sans, sans-serif" font-size="19.5" fill="#3f82f0" stroke="#3f82f0" stroke-width="0.3">z</text><text x="1639.6" y="753.4" font-family="Liberation Sans, sans-serif" font-size="19.5" fill="#4fd95d" stroke="#4fd95d" stroke-width="0.3">y</text><text x="1815.6" y="753.2" font-family="Liberation Sans, sans-serif" font-size="19.5" fill="#f04a4a" stroke="#f04a4a" stroke-width="0.3">x</text><path d="M1728.4 639.2 L1733.9 633.8 L1739.4 639.2" fill="none" stroke="#5c5c5c" stroke-width="1.1"/><path d="M1728.4 814.6 L1733.9 820 L1739.4 814.6" fill="none" stroke="#5c5c5c" stroke-width="1.1"/><path d="M1646.2 720.6 L1640.6 726.2 L1646.2 731.8" fill="none" stroke="#5c5c5c" stroke-width="1.1"/><path d="M1822 720.6 L1827.6 726.2 L1822 731.8" fill="none" stroke="#5c5c5c" stroke-width="1.1"/><path d="M1786.3 668 L1793 661.6 L1799.7 668 M1788.2 666.8 V673.6 H1791.3 V669.3 H1794.7 V673.6 H1797.8 V666.8" fill="none" stroke="#5c5c5c" stroke-width="1.1" stroke-linejoin="round"/><path d="M1665.8 784 A6.6 6.6 0 1 1 1667.5 794.6" fill="none" stroke="#5c5c5c" stroke-width="1.1"/><path d="M1662.3 786.8 L1666.8 782 L1668.2 788Z" fill="#555"/><path d="M1798.5 784 A6.6 6.6 0 1 0 1796.8 794.6" fill="none" stroke="#5c5c5c" stroke-width="1.1"/><path d="M1802 786.8 L1797.5 782 L1796.1 788Z" fill="#555"/></svg>
</div>
</body></html>
